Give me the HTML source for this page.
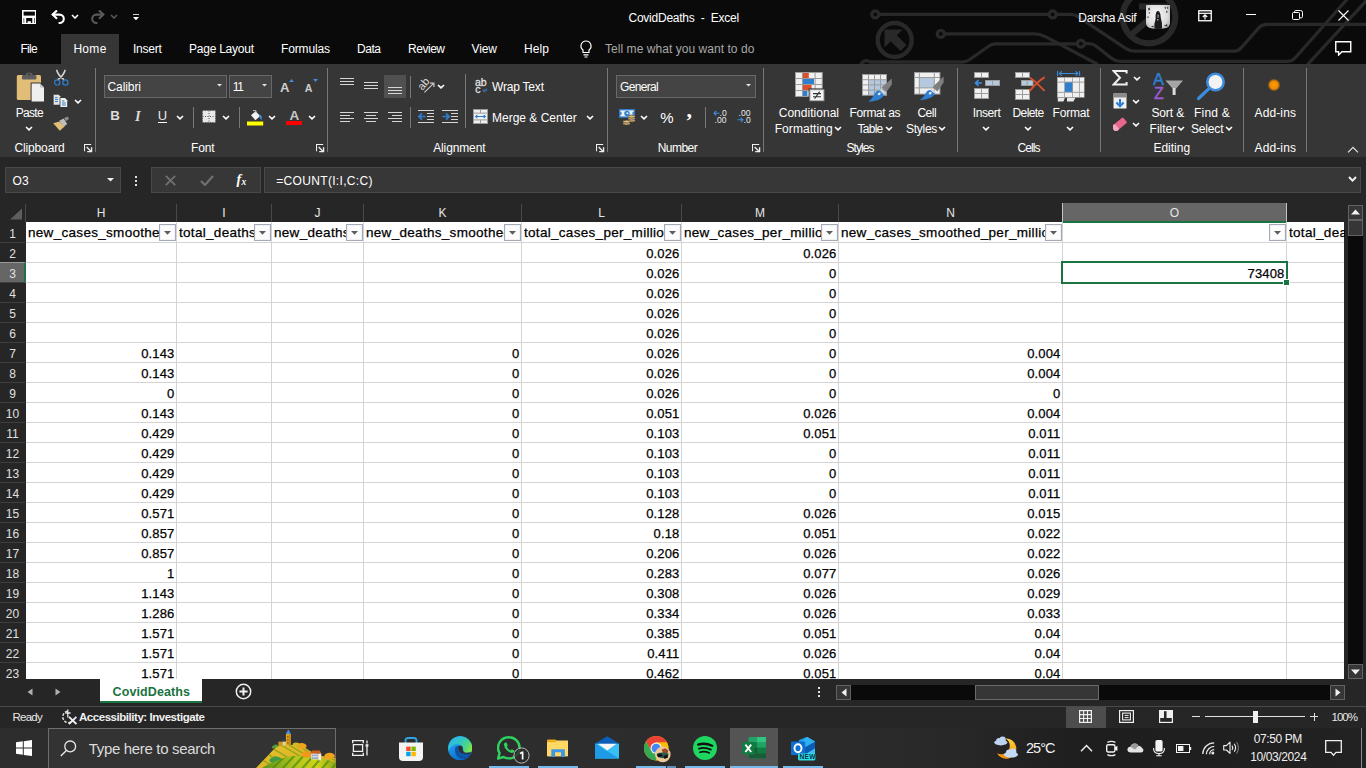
<!DOCTYPE html>
<html lang="en"><head><meta charset="utf-8"><title>CovidDeaths - Excel</title>
<style>
html,body{margin:0;padding:0;}
body{width:1366px;height:768px;overflow:hidden;background:#262626;position:relative;font-family:"Liberation Sans",sans-serif;font-size:12px;color:#fff;}
.a{position:absolute;display:block;box-sizing:border-box;}
.t{position:absolute;white-space:pre;display:block;}
.c{position:absolute;white-space:pre;display:block;color:#000;font-size:13px;line-height:20px;height:20px;overflow:hidden;-webkit-text-stroke:.25px #000;}
.r{text-align:right;}
.fb{position:absolute;box-sizing:border-box;width:17px;height:17px;border:1px solid #a4abb6;background:#fcfcfc;box-shadow:inset 0 0 0 1px #f0f2f5;}
.fb svg{position:absolute;left:4px;top:6.4px;}
.sep{position:absolute;width:1px;background:#787878;}
</style></head>
<body>
<div class="a" style="left:0px;top:0px;width:1366px;height:64px;background:#0a0a0a;"></div>
<svg class="a" style="left:0px;top:0px;" width="1366" height="64" viewBox="0 0 1366 64">
<g fill="none" stroke="#292929" stroke-width="3.3" stroke-linecap="round" stroke-linejoin="round">
<circle cx="875.3" cy="14.4" r="3.5"/><path d="M880 14.4 H1048"/><circle cx="1052.7" cy="14.4" r="3.5"/>
<path d="M1057.4 14.4 H1071 Q1075 14.4 1078 16.6 L1126 48.6 Q1130 51.2 1135 51.2 H1234 Q1238 51.2 1241 48 L1259 27.6 Q1262 24.4 1267 24.4 H1366"/>
<circle cx="894.7" cy="40" r="17" stroke-width="4.4"/>
<circle cx="940.8" cy="33.9" r="3.5"/><path d="M945.5 33.9 H1034 Q1040 33.9 1045 36.4 L1097 64"/>
<path d="M861 64 Q865 58.5 870 62 H962 Q966 62 969 60 L989 46 Q992 43.8 996 43.8 H1076"/><circle cx="1080.9" cy="43.7" r="3.5"/>
<path d="M1085.6 43.7 H1089 Q1093 43.7 1096 46 L1112 58.6 Q1115.5 61.3 1120 61.3 H1288 Q1292 61.3 1295 58 L1346.5 0"/>
<path d="M1308 64 L1366 1"/>
<circle cx="1149" cy="17" r="26.3" stroke-width="6.2"/>
<path d="M1132 34 L1162 8 M1139 6.5 H1165 V28" stroke-width="6" stroke-linecap="butt" stroke-linejoin="miter"/>
</g>
<path d="M884.5 29.5 H902.5 L896.8 35.2 L906.5 45 L900.5 51 L890.7 41.3 L884.5 47.5 Z" fill="#292929"/>
</svg>
<svg class="a" style="left:21.7px;top:9.7px;" width="14.5" height="14.5" viewBox="0 0 14.5 14.5"><rect x=".8" y=".8" width="12.9" height="12.9" fill="none" stroke="#fff" stroke-width="1.6"/><rect x=".8" y="5.6" width="12.9" height="2.4" fill="#fff"/><rect x="2.2" y="7.8" width="2" height="6" fill="#fff"/><rect x="10.3" y="7.8" width="2" height="6" fill="#fff"/><rect x="5.6" y="11.2" width="3.2" height="2.6" fill="#fff"/></svg>
<svg class="a" style="left:51px;top:9.5px;" width="15" height="15" viewBox="0 0 15 15"><path d="M1.6 4.6 H8.6 A4.2 4.2 0 0 1 8.6 13 H7.6" fill="none" stroke="#fff" stroke-width="2.1"/><path d="M6 0.4 L1.6 4.6 L6 8.8" fill="none" stroke="#fff" stroke-width="2.1"/></svg>
<svg class="a" style="left:71px;top:14px;" width="8" height="5" viewBox="0 0 8 5"><path d="M1 1 L4.0 4 L7 1" fill="none" stroke="#fff" stroke-width="1.55"/></svg>
<svg class="a" style="left:89.5px;top:9.5px;" width="15" height="15" viewBox="0 0 15 15"><g transform="translate(15,0) scale(-1,1)"><path d="M1.6 4.6 H8.6 A4.2 4.2 0 0 1 8.6 13 H7.6" fill="none" stroke="#5a5a5a" stroke-width="2.1"/><path d="M6 0.4 L1.6 4.6 L6 8.8" fill="none" stroke="#5a5a5a" stroke-width="2.1"/></g></svg>
<svg class="a" style="left:110px;top:14px;" width="8" height="5" viewBox="0 0 8 5"><path d="M1 1 L4.0 4 L7 1" fill="none" stroke="#5a5a5a" stroke-width="1.55"/></svg>
<div class="a" style="left:132.5px;top:13.6px;width:6px;height:1.1px;background:#d0d0d0;"></div>
<svg class="a" style="left:132.5px;top:16.8px;" width="6" height="3.4" viewBox="0 0 6 3.4"><path d="M0 0 H6 L3.0 3.4 Z" fill="#fff"/></svg>
<span id="t0" class="t" style="left:628.5px;top:10.3px;font-size:12px;line-height:16px;color:#fff;letter-spacing:-0.24px;">CovidDeaths  -  Excel</span>
<span id="t1" class="t" style="left:1078.3px;top:10.3px;font-size:12px;line-height:16px;color:#fff;letter-spacing:-0.30px;">Darsha Asif</span>
<svg class="a" style="left:1146px;top:5px;" width="24" height="24" viewBox="0 0 24 24"><defs><clipPath id="avc"><path d="M0 0 H24 V18 Q24 22 19 23.2 Q12 24.6 5 23.2 Q0 22 0 18 Z"/></clipPath>
<radialGradient id="avg" cx=".45" cy=".4" r=".75"><stop offset="0" stop-color="#fafafa"/><stop offset=".6" stop-color="#dcdcdc"/><stop offset="1" stop-color="#9a9a9a"/></radialGradient></defs>
<g clip-path="url(#avc)"><rect width="24" height="25" fill="url(#avg)"/>
<path d="M10.2 7.4 Q11.6 5.2 13.2 6.6 Q15 9 14.8 13 Q16.6 18 16 24 H8.4 Q8 18 9.6 14 Q9 10 10.2 7.4 Z" fill="#1a1a1a"/>
<path d="M11.4 9.4 Q12.4 8.6 12.8 10.2 L12.6 13 L11.4 13 Z" fill="#8a8a8a"/><circle cx="11.8" cy="14.8" r=".7" fill="#e0e0e0"/>
<path d="M2 3.4 l1.6 -1 l.6 2 l-1.4 1.4 z M2.6 7 l1.4 .4 l-.6 1.8 z M18.4 2 l2 .6 l-1 1.6 z M21 1.6 l1.6 1.4 l-1.2 1.2 z M20 5.6 l2 1.4 l-1.6 1 z M1.4 11 l1.6 1 l-1.2 1.4z M18 21 l3 -2 l.6 2.4 z M5 21.6 l2.4 -1 l.4 2 z" fill="#3a3a3a"/>
</g></svg>
<svg class="a" style="left:1197.5px;top:9.5px;" width="14" height="12" viewBox="0 0 14 12"><rect x=".75" y=".75" width="12.5" height="10" fill="none" stroke="#fff" stroke-width="1.3"/><path d="M.75 3.3 H13.25" stroke="#fff" stroke-width="1.2"/><path d="M7 9.5 V5 M4.8 7 L7 4.9 L9.2 7" fill="none" stroke="#fff" stroke-width="1.2"/></svg>
<div class="a" style="left:1246px;top:14px;width:10px;height:1px;background:#fff;"></div>
<svg class="a" style="left:1292px;top:10px;" width="11" height="11" viewBox="0 0 11 11"><rect x=".5" y="2.5" width="7" height="7" rx="1" fill="none" stroke="#fff" stroke-width="1"/><path d="M2.5 2.5 V1.8 Q2.5 .5 3.8 .5 H8.6 Q10.5 .5 10.5 2.4 V6.6 Q10.5 7.8 9.3 7.8 H7.6" fill="none" stroke="#fff" stroke-width="1"/></svg>
<svg class="a" style="left:1338px;top:10px;" width="11" height="11" viewBox="0 0 11 11"><path d="M.5 .5 L10.5 10.5 M10.5 .5 L.5 10.5" stroke="#fff" stroke-width="1.1"/></svg>
<svg class="a" style="left:1335px;top:41px;" width="17" height="15" viewBox="0 0 17 15"><path d="M.75 .75 H15.75 V10.75 H7 L3.6 14 V10.75 H.75 Z" fill="none" stroke="#fff" stroke-width="1.4" stroke-linejoin="miter"/></svg>
<div class="a" style="left:61px;top:34px;width:58px;height:30px;background:#363636;"></div>
<span id="t2" class="t" style="left:20.4px;top:41.2px;font-size:12px;line-height:16px;color:#fff;letter-spacing:-0.65px;">File</span>
<span id="t3" class="t" style="left:73.4px;top:41.2px;font-size:12px;line-height:16px;color:#fff;letter-spacing:0.30px;">Home</span>
<span id="t4" class="t" style="left:133.0px;top:41.2px;font-size:12px;line-height:16px;color:#fff;letter-spacing:-0.24px;">Insert</span>
<span id="t5" class="t" style="left:189.0px;top:41.2px;font-size:12px;line-height:16px;color:#fff;letter-spacing:-0.24px;">Page Layout</span>
<span id="t6" class="t" style="left:281.0px;top:41.2px;font-size:12px;line-height:16px;color:#fff;letter-spacing:-0.14px;">Formulas</span>
<span id="t7" class="t" style="left:357.0px;top:41.2px;font-size:12px;line-height:16px;color:#fff;letter-spacing:-0.45px;">Data</span>
<span id="t8" class="t" style="left:408.0px;top:41.2px;font-size:12px;line-height:16px;color:#fff;letter-spacing:-0.47px;">Review</span>
<span id="t9" class="t" style="left:471.5px;top:41.2px;font-size:12px;line-height:16px;color:#fff;letter-spacing:-0.10px;">View</span>
<span id="t10" class="t" style="left:524.0px;top:41.2px;font-size:12px;line-height:16px;color:#fff;letter-spacing:0.10px;">Help</span>
<span id="t11" class="t" style="left:605.0px;top:41.2px;font-size:12px;line-height:16px;color:#a8a8a8;letter-spacing:0.05px;">Tell me what you want to do</span>
<svg class="a" style="left:578.5px;top:40px;" width="14" height="18" viewBox="0 0 14 18"><path d="M7 1 A5 5 0 0 1 10 10 V12.5 H4 V10 A5 5 0 0 1 7 1 Z" fill="none" stroke="#fff" stroke-width="1.2"/><path d="M4.5 14.8 H9.5 M5.5 17 H8.5" stroke="#fff" stroke-width="1.2"/></svg>
<div class="a" style="left:0px;top:64px;width:1366px;height:93px;background:#363636;"></div>
<svg class="a" style="left:16px;top:72px;" width="29" height="31" viewBox="0 0 29 31">
<rect x="0.8" y="3" width="24.2" height="25" rx="1.6" fill="#e2bd78"/>
<rect x="6" y="3" width="14.4" height="4.4" rx="1.2" fill="#5e5e5e"/>
<path d="M10 4 V2.8 Q10 .4 13.2 .4 Q16.4 .4 16.4 2.8 V4 Z" fill="#5e5e5e"/><circle cx="13.2" cy="2.6" r="1.1" fill="#363636"/>
<path d="M14.6 10.6 H24.4 L29 15.2 V30 H14.6 Z" fill="#363636"/>
<path d="M15.6 11.6 H24 L28 15.6 V29.4 H15.6 Z" fill="#efefef"/>
<path d="M24 11.6 V15.6 H28 Z" fill="#c4c4c4"/></svg>
<span id="t12" class="t" style="left:15.7px;top:104.8px;font-size:12px;line-height:16px;color:#fff;letter-spacing:-0.70px;">Paste</span>
<svg class="a" style="left:24.5px;top:126px;" width="8" height="4.9" viewBox="0 0 8 4.9"><path d="M1 1 L4.0 3.9 L7 1" fill="none" stroke="#fff" stroke-width="1.55"/></svg>
<svg class="a" style="left:53.6px;top:70px;overflow:visible;" width="14" height="16" viewBox="0 0 14 16"><g transform="translate(2.2,0)"><path d="M.6 .4 Q2 5 7.4 9.4 M8.8 .4 Q7.4 5 2 9.4" stroke="#d4d4d4" stroke-width="1.6" fill="none" stroke-linecap="round"/>
<circle cx="1.2" cy="12.4" r="2.6" fill="none" stroke="#2f7ed0" stroke-width="1.2" transform="translate(-0.2,0)"/><circle cx="9.2" cy="12.4" r="2.6" fill="none" stroke="#2f7ed0" stroke-width="1.2"/></g></svg>
<svg class="a" style="left:52.6px;top:93.6px;" width="15.5" height="14.5" viewBox="0 0 15.5 14.5"><path d="M.4 .4 H5.6 L7.8 2.6 V11 H.4 Z" fill="#e6e6e6" stroke="#363636" stroke-width=".5"/>
<path d="M2 3.6 H4.6 M2 5.6 H5 M2 7.6 H5" stroke="#2f7ed0" stroke-width="1"/>
<path d="M6.6 3.2 H12.4 L15 5.8 V13.8 H6.6 Z" fill="#363636"/>
<path d="M7.4 4 H12 L14.2 6.2 V13 H7.4 Z" fill="#efefef"/>
<path d="M9 7 H11.4 M9 9 H12.8 M9 11 H12.8" stroke="#2f7ed0" stroke-width="1"/></svg>
<svg class="a" style="left:74.3px;top:99px;" width="8" height="4.9" viewBox="0 0 8 4.9"><path d="M1 1 L4.0 3.9 L7 1" fill="none" stroke="#fff" stroke-width="1.55"/></svg>
<svg class="a" style="left:53.2px;top:116.4px;" width="16.5" height="15" viewBox="0 0 16.5 15"><path d="M.2 7.2 L6.6 5.4 L11.6 10.4 L6.8 14.8 Z" fill="#e2bd78"/>
<path d="M6.2 4.8 L10.6 2.4 L14.2 8 L11 10.6 Z" fill="#bdbdbd"/>
<path d="M11.2 2 L14.8 .4 L16 2.8 L12.8 5.2 Z" fill="#8e8e8e"/></svg>
<span id="t13" class="t" style="left:14.4px;top:140.2px;font-size:12px;line-height:16px;color:#fff;letter-spacing:-0.13px;">Clipboard</span>
<svg class="a" style="left:84px;top:144px;" width="9" height="9" viewBox="0 0 9 9"><path d="M.5 7.2 V.5 H7.2" fill="none" stroke="#f0f0f0" stroke-width="1.1"/><path d="M2.6 3 L7 7.2" fill="none" stroke="#f0f0f0" stroke-width="1.3"/><path d="M7.6 3.2 V7.6 H3.2" fill="none" stroke="#f0f0f0" stroke-width="1.3"/></svg>
<div class="sep" style="left:95px;top:68px;height:84px"></div>
<div class="a" style="left:104px;top:75px;width:123px;height:23px;background:#444;border:1px solid #686868;"></div>
<div class="a" style="left:229px;top:75px;width:43px;height:23px;background:#444;border:1px solid #686868;"></div>
<span id="t14" class="t" style="left:107.5px;top:79.0px;font-size:12px;line-height:16px;color:#fff;letter-spacing:-0.09px;">Calibri</span>
<span id="t15" class="t" style="left:232.7px;top:79.0px;font-size:12px;line-height:16px;color:#fff;letter-spacing:-1.20px;">11</span>
<svg class="a" style="left:217px;top:84.2px;" width="5" height="2.6" viewBox="0 0 5 2.6"><path d="M0 0 H5 L2.5 2.6 Z" fill="#e6e6e6"/></svg>
<svg class="a" style="left:262px;top:84.2px;" width="5" height="2.6" viewBox="0 0 5 2.6"><path d="M0 0 H5 L2.5 2.6 Z" fill="#e6e6e6"/></svg>
<span id="t16" class="t" style="left:280.0px;top:79.5px;font-size:13.2px;line-height:16px;color:#cfcfcf;font-weight:700;">A</span>
<svg class="a" style="left:289px;top:78.5px;" width="5" height="3" viewBox="0 0 5 3"><path d="M0 3 L2.5 0 L5 3 Z" fill="#3c8de0"/></svg>
<span id="t17" class="t" style="left:304.8px;top:80.4px;font-size:10.6px;line-height:16px;color:#cfcfcf;font-weight:700;">A</span>
<svg class="a" style="left:312.5px;top:79px;" width="5" height="3" viewBox="0 0 5 3"><path d="M0 0 H5 L2.5 3 Z" fill="#3c8de0"/></svg>
<span id="t18" class="t" style="left:110.2px;top:108.4px;font-size:13.3px;line-height:16px;color:#dcdcdc;font-weight:700;">B</span>
<span id="t19" class="t" style="left:135.0px;top:108.0px;font-size:14.5px;line-height:16px;color:#dcdcdc;font-weight:700;font-family:'Liberation Serif',serif;font-style:italic;">I</span>
<span id="t20" class="t" style="left:157.8px;top:108.3px;font-size:13px;line-height:16px;color:#e6e6e6;">U</span>
<div class="a" style="left:158px;top:122px;width:9px;height:1px;background:#fff;"></div>
<svg class="a" style="left:176px;top:115px;" width="8" height="4.9" viewBox="0 0 8 4.9"><path d="M1 1 L4.0 3.9 L7 1" fill="none" stroke="#fff" stroke-width="1.55"/></svg>
<div class="sep" style="left:193px;top:107px;height:21px"></div>
<svg class="a" style="left:201.5px;top:110px;" width="14" height="13" viewBox="0 0 14 13"><rect x=".5" y=".5" width="13" height="12" fill="#e8e8e8"/><g stroke="#555" stroke-width="1" stroke-dasharray="1 1.5"><path d="M.5 .5 H13.5 M.5 6.5 H13.5 M.5 12.5 H13.5 M.5 .5 V12.5 M7 .5 V12.5 M13.5 .5 V12.5"/></g></svg>
<svg class="a" style="left:222.3px;top:115px;" width="8" height="4.9" viewBox="0 0 8 4.9"><path d="M1 1 L4.0 3.9 L7 1" fill="none" stroke="#fff" stroke-width="1.55"/></svg>
<div class="sep" style="left:239px;top:107px;height:21px"></div>
<svg class="a" style="left:247px;top:109.5px;" width="17" height="16" viewBox="0 0 17 16"><rect x="0" y="11.5" width="16.2" height="4" fill="#ffff00"/>
<path d="M4 5.2 L8.6 1.2 L13.2 6 L8.4 10.2 Z" fill="#f3f3f3"/>
<path d="M6 0.6 H9 V3" fill="none" stroke="#bdbdbd" stroke-width="1"/>
<path d="M12.5 4.2 Q16 6 14.4 10 Q12.5 8 12.2 6 Z" fill="#3c8de0"/></svg>
<svg class="a" style="left:268.2px;top:115px;" width="8" height="4.9" viewBox="0 0 8 4.9"><path d="M1 1 L4.0 3.9 L7 1" fill="none" stroke="#fff" stroke-width="1.55"/></svg>
<span id="t21" class="t" style="left:289.6px;top:108.1px;font-size:13.5px;line-height:16px;color:#c8c8c8;font-weight:700;">A</span>
<div class="a" style="left:286px;top:121px;width:16.2px;height:4px;background:#ff0000;"></div>
<svg class="a" style="left:307.6px;top:115px;" width="8" height="4.9" viewBox="0 0 8 4.9"><path d="M1 1 L4.0 3.9 L7 1" fill="none" stroke="#fff" stroke-width="1.55"/></svg>
<span id="t22" class="t" style="left:191.0px;top:140.2px;font-size:12px;line-height:16px;color:#fff;letter-spacing:-0.17px;">Font</span>
<svg class="a" style="left:316px;top:144px;" width="9" height="9" viewBox="0 0 9 9"><path d="M.5 7.2 V.5 H7.2" fill="none" stroke="#f0f0f0" stroke-width="1.1"/><path d="M2.6 3 L7 7.2" fill="none" stroke="#f0f0f0" stroke-width="1.3"/><path d="M7.6 3.2 V7.6 H3.2" fill="none" stroke="#f0f0f0" stroke-width="1.3"/></svg>
<div class="sep" style="left:327px;top:68px;height:84px"></div>
<svg class="a" style="left:340px;top:78px;" width="14" height="7" viewBox="0 0 14 7"><rect x="0" y="0" width="14" height="1" fill="#d6d6d6"/><rect x="0" y="3" width="14" height="1" fill="#d6d6d6"/><rect x="0" y="6" width="14" height="1" fill="#d6d6d6"/></svg>
<svg class="a" style="left:364px;top:82px;" width="14" height="7" viewBox="0 0 14 7"><rect x="0" y="0" width="14" height="1" fill="#d6d6d6"/><rect x="0" y="3" width="14" height="1" fill="#d6d6d6"/><rect x="0" y="6" width="14" height="1" fill="#d6d6d6"/></svg>
<div class="a" style="left:384px;top:75px;width:22px;height:23px;background:#505050;"></div>
<svg class="a" style="left:388px;top:87px;" width="14" height="7" viewBox="0 0 14 7"><rect x="0" y="0" width="14" height="1" fill="#d6d6d6"/><rect x="0" y="3" width="14" height="1" fill="#d6d6d6"/><rect x="0" y="6" width="14" height="1" fill="#d6d6d6"/></svg>
<div class="sep" style="left:410px;top:76px;height:22px"></div>
<svg class="a" style="left:417px;top:75px;" width="20" height="19" viewBox="0 0 20 19"><g transform="translate(6.6,9) rotate(-50)"><text x="-6.2" y="3.6" font-family="Liberation Sans, sans-serif" font-size="11" fill="#dcdcdc">ab</text></g>
<path d="M7.4 17.4 L16.6 8.4 M16.9 12 V8.1 H13" fill="none" stroke="#c8c8c8" stroke-width="1.2"/></svg>
<svg class="a" style="left:437.4px;top:83.8px;" width="8" height="4.9" viewBox="0 0 8 4.9"><path d="M1 1 L4.0 3.9 L7 1" fill="none" stroke="#fff" stroke-width="1.55"/></svg>
<div class="sep" style="left:465px;top:74px;height:54px"></div>
<svg class="a" style="left:475px;top:77.8px;" width="14" height="16" viewBox="0 0 14 16"><text x="0" y="7.8" font-family="Liberation Sans, sans-serif" font-size="10.5" fill="#e0e0e0" stroke="#e0e0e0" stroke-width=".3">ab</text>
<text x="0.2" y="15.2" font-family="Liberation Sans, sans-serif" font-size="10.5" fill="#e0e0e0" stroke="#e0e0e0" stroke-width=".3">c</text>
<path d="M11.4 10.4 V12.8 H8.2 M9.6 11.2 L8 12.8 L9.6 14.4" fill="none" stroke="#2f7ed0" stroke-width="1"/></svg>
<span id="t23" class="t" style="left:492.0px;top:79.4px;font-size:12px;line-height:16px;color:#fff;letter-spacing:-0.20px;">Wrap Text</span>
<svg class="a" style="left:340px;top:112px;" width="14" height="10" viewBox="0 0 14 10"><rect x="0" y="0" width="14" height="1" fill="#d6d6d6"/><rect x="0" y="3" width="10" height="1" fill="#d6d6d6"/><rect x="0" y="6" width="14" height="1" fill="#d6d6d6"/><rect x="0" y="9" width="10" height="1" fill="#d6d6d6"/></svg>
<svg class="a" style="left:364px;top:112px;" width="14" height="10" viewBox="0 0 14 10"><rect x="0.0" y="0" width="14" height="1" fill="#d6d6d6"/><rect x="2.0" y="3" width="10" height="1" fill="#d6d6d6"/><rect x="0.0" y="6" width="14" height="1" fill="#d6d6d6"/><rect x="2.0" y="9" width="10" height="1" fill="#d6d6d6"/></svg>
<svg class="a" style="left:388px;top:112px;" width="14" height="10" viewBox="0 0 14 10"><rect x="0" y="0" width="14" height="1" fill="#d6d6d6"/><rect x="4" y="3" width="10" height="1" fill="#d6d6d6"/><rect x="0" y="6" width="14" height="1" fill="#d6d6d6"/><rect x="4" y="9" width="10" height="1" fill="#d6d6d6"/></svg>
<div class="sep" style="left:410px;top:107px;height:21px"></div>
<svg class="a" style="left:418px;top:110px;" width="16" height="13" viewBox="0 0 16 13"><rect x="0" y="0" width="16" height="1" fill="#d6d6d6"/><rect x="9" y="3" width="7" height="1" fill="#d6d6d6"/><rect x="9" y="6" width="7" height="1" fill="#d6d6d6"/><rect x="9" y="9" width="7" height="1" fill="#d6d6d6"/><rect x="0" y="12" width="16" height="1" fill="#d6d6d6"/><path d="M7.6 6.5 H1.2 M4 3.4 L.9 6.5 L4 9.6" fill="none" stroke="#2f7ed0" stroke-width="1.7"/></svg>
<svg class="a" style="left:442px;top:110px;" width="16" height="13" viewBox="0 0 16 13"><rect x="0" y="0" width="16" height="1" fill="#d6d6d6"/><rect x="9" y="3" width="7" height="1" fill="#d6d6d6"/><rect x="9" y="6" width="7" height="1" fill="#d6d6d6"/><rect x="9" y="9" width="7" height="1" fill="#d6d6d6"/><rect x="0" y="12" width="16" height="1" fill="#d6d6d6"/><path d="M.4 6.5 H6.8 M4 3.4 L7.1 6.5 L4 9.6" fill="none" stroke="#2f7ed0" stroke-width="1.7"/></svg>
<svg class="a" style="left:473px;top:109px;" width="15" height="15" viewBox="0 0 15 15"><rect x="0" y="0" width="15" height="15" fill="#9c9c9c"/>
<rect x="1" y="1" width="6" height="2.6" fill="#f0f0f0"/><rect x="8" y="1" width="6" height="2.6" fill="#f0f0f0"/>
<rect x="1" y="4.6" width="13" height="5.8" fill="#f0f0f0"/>
<rect x="1" y="11.4" width="6" height="2.6" fill="#f0f0f0"/><rect x="8" y="11.4" width="6" height="2.6" fill="#f0f0f0"/>
<path d="M2.6 7.5 H12.4 M4.4 5.9 L2.6 7.5 L4.4 9.1 M10.6 5.9 L12.4 7.5 L10.6 9.1" fill="none" stroke="#2f7ed0" stroke-width="1.1"/></svg>
<span id="t24" class="t" style="left:492.0px;top:110.0px;font-size:12px;line-height:16px;color:#fff;">Merge &amp; Center</span>
<svg class="a" style="left:586px;top:115px;" width="8" height="4.9" viewBox="0 0 8 4.9"><path d="M1 1 L4.0 3.9 L7 1" fill="none" stroke="#fff" stroke-width="1.55"/></svg>
<span id="t25" class="t" style="left:433.2px;top:140.2px;font-size:12px;line-height:16px;color:#fff;letter-spacing:-0.13px;">Alignment</span>
<svg class="a" style="left:596px;top:144px;" width="9" height="9" viewBox="0 0 9 9"><path d="M.5 7.2 V.5 H7.2" fill="none" stroke="#f0f0f0" stroke-width="1.1"/><path d="M2.6 3 L7 7.2" fill="none" stroke="#f0f0f0" stroke-width="1.3"/><path d="M7.6 3.2 V7.6 H3.2" fill="none" stroke="#f0f0f0" stroke-width="1.3"/></svg>
<div class="sep" style="left:607px;top:68px;height:84px"></div>
<div class="a" style="left:616px;top:75px;width:140px;height:23px;background:#444;border:1px solid #686868;"></div>
<span id="t26" class="t" style="left:620.0px;top:79.0px;font-size:12px;line-height:16px;color:#fff;letter-spacing:-0.67px;">General</span>
<svg class="a" style="left:745.8px;top:84.2px;" width="5" height="2.6" viewBox="0 0 5 2.6"><path d="M0 0 H5 L2.5 2.6 Z" fill="#e6e6e6"/></svg>
<svg class="a" style="left:619px;top:109px;" width="17" height="17" viewBox="0 0 17 17"><rect x="0" y="0" width="16" height="8.8" fill="#2f7ed0"/><rect x="1.4" y="1.4" width="13.2" height="6" fill="#f0f0f0"/>
<rect x="0" y="3.2" width="2.6" height="2.4" fill="#2f7ed0"/><rect x="13.4" y="3.2" width="2.6" height="2.4" fill="#2f7ed0"/>
<circle cx="8" cy="4.4" r="2.7" fill="#2f7ed0"/><circle cx="8.4" cy="4.2" r="1" fill="#f0f0f0"/>
<g fill="#e2bd78" stroke="#363636" stroke-width=".7"><ellipse cx="12.6" cy="11.6" rx="3.6" ry="1.5"/><ellipse cx="12.6" cy="9.6" rx="3.6" ry="1.5"/><ellipse cx="12.6" cy="7.6" rx="3.6" ry="1.5"/>
<ellipse cx="7.6" cy="14.6" rx="3.6" ry="1.5"/><ellipse cx="7.6" cy="12.6" rx="3.6" ry="1.5"/></g></svg>
<svg class="a" style="left:640.3px;top:115px;" width="8" height="4.9" viewBox="0 0 8 4.9"><path d="M1 1 L4.0 3.9 L7 1" fill="none" stroke="#fff" stroke-width="1.55"/></svg>
<span id="t27" class="t" style="left:660.2px;top:110.0px;font-size:15px;line-height:16px;color:#fff;">%</span>
<span id="t28" class="t" style="left:686.4px;top:95.9px;font-size:22px;line-height:28px;color:#fff;font-weight:700;font-family:'Liberation Serif',serif;">,</span>
<div class="sep" style="left:705px;top:107px;height:21px"></div>
<svg class="a" style="left:713px;top:110.3px;" width="15.5" height="14" viewBox="0 0 15.5 14"><path d="M1 3.2 H6.4 M3.2 1 L1 3.2 L3.2 5.4" fill="none" stroke="#3c8de0" stroke-width="1.1"/><text x="6.6" y="6.2" font-family="Liberation Sans, sans-serif" font-size="8.6" fill="#e8e8e8">.0</text><text x="1.6" y="13.2" font-family="Liberation Sans, sans-serif" font-size="8.6" fill="#e8e8e8">.00</text></svg>
<svg class="a" style="left:737px;top:110.3px;" width="15.5" height="14" viewBox="0 0 15.5 14"><path d="M0.6 9.8 H6 M3.8 7.6 L6 9.8 L3.8 12" fill="none" stroke="#3c8de0" stroke-width="1.1"/><text x="1.6" y="6.2" font-family="Liberation Sans, sans-serif" font-size="8.6" fill="#e8e8e8">.00</text><text x="6.6" y="13.2" font-family="Liberation Sans, sans-serif" font-size="8.6" fill="#e8e8e8">.0</text></svg>
<span id="t29" class="t" style="left:657.7px;top:140.2px;font-size:12px;line-height:16px;color:#fff;letter-spacing:-0.52px;">Number</span>
<svg class="a" style="left:752px;top:144px;" width="9" height="9" viewBox="0 0 9 9"><path d="M.5 7.2 V.5 H7.2" fill="none" stroke="#f0f0f0" stroke-width="1.1"/><path d="M2.6 3 L7 7.2" fill="none" stroke="#f0f0f0" stroke-width="1.3"/><path d="M7.6 3.2 V7.6 H3.2" fill="none" stroke="#f0f0f0" stroke-width="1.3"/></svg>
<div class="sep" style="left:763px;top:68px;height:84px"></div>
<svg class="a" style="left:795px;top:71.5px;" width="30" height="30" viewBox="0 0 30 30"><rect x="0" y="0" width="27.80" height="25.00" fill="#9c9c9c"/><rect x="1" y="1" width="6" height="5" fill="#f0f0f0"/><rect x="1" y="7" width="6" height="5" fill="#f0f0f0"/><rect x="1" y="13" width="6" height="5" fill="#f0f0f0"/><rect x="1" y="19" width="6" height="5" fill="#f0f0f0"/><rect x="8" y="1" width="11.6" height="5" fill="#f0f0f0"/><rect x="8" y="7" width="11.6" height="5" fill="#f0f0f0"/><rect x="8" y="13" width="11.6" height="5" fill="#f0f0f0"/><rect x="8" y="19" width="11.6" height="5" fill="#f0f0f0"/><rect x="20.6" y="1" width="6.2" height="5" fill="#f0f0f0"/><rect x="20.6" y="7" width="6.2" height="5" fill="#f0f0f0"/><rect x="20.6" y="13" width="6.2" height="5" fill="#f0f0f0"/><rect x="20.6" y="19" width="6.2" height="5" fill="#f0f0f0"/><rect x="8" y="1" width="5.8" height="5" fill="#dc4f2a"/><rect x="8" y="7" width="11" height="5" fill="#2f7ed0"/><rect x="8" y="13" width="8.6" height="5" fill="#dc4f2a"/><rect x="8" y="19" width="4.4" height="5" fill="#2f7ed0"/><rect x="13.6" y="16.4" width="16.4" height="13.6" fill="#363636"/><rect x="14.4" y="17.2" width="15" height="12" fill="#9c9c9c"/><rect x="15.4" y="18.2" width="13" height="10" fill="#f4f4f4"/><path d="M18 21.6 H26 M18 24.8 H26 M24.6 19.6 L19.6 26.8" stroke="#333" stroke-width="1.1" fill="none"/></svg>
<span id="t30" class="t" style="left:778.7px;top:105.3px;font-size:12px;line-height:16px;color:#fff;letter-spacing:0.03px;">Conditional</span>
<span id="t31" class="t" style="left:774.7px;top:121.2px;font-size:12px;line-height:16px;color:#fff;letter-spacing:0.07px;">Formatting</span>
<svg class="a" style="left:834.4px;top:125.7px;" width="8" height="4.9" viewBox="0 0 8 4.9"><path d="M1 1 L4.0 3.9 L7 1" fill="none" stroke="#fff" stroke-width="1.55"/></svg>
<svg class="a" style="left:862px;top:72px;" width="31" height="31" viewBox="0 0 31 31"><g transform="translate(0,2)"><rect x="0" y="0" width="25.00" height="21.80" fill="#9c9c9c"/><rect x="1" y="1" width="5" height="4.2" fill="#f0f0f0"/><rect x="1" y="6.2" width="5" height="4.2" fill="#f0f0f0"/><rect x="1" y="11.4" width="5" height="4.2" fill="#f0f0f0"/><rect x="1" y="16.6" width="5" height="4.2" fill="#f0f0f0"/><rect x="7" y="1" width="5" height="4.2" fill="#f0f0f0"/><rect x="7" y="6.2" width="5" height="4.2" fill="#b4c8de"/><rect x="7" y="11.4" width="5" height="4.2" fill="#b4c8de"/><rect x="7" y="16.6" width="5" height="4.2" fill="#b4c8de"/><rect x="13" y="1" width="5" height="4.2" fill="#f0f0f0"/><rect x="13" y="6.2" width="5" height="4.2" fill="#b4c8de"/><rect x="13" y="11.4" width="5" height="4.2" fill="#b4c8de"/><rect x="13" y="16.6" width="5" height="4.2" fill="#b4c8de"/><rect x="19" y="1" width="5" height="4.2" fill="#f0f0f0"/><rect x="19" y="6.2" width="5" height="4.2" fill="#b4c8de"/><rect x="19" y="11.4" width="5" height="4.2" fill="#b4c8de"/><rect x="19" y="16.6" width="5" height="4.2" fill="#b4c8de"/></g><path d="M29.799999999999997 6.3999999999999995 L29.799999999999997 12.399999999999999 L24.400000000000002 20.0 L19.6 15.600000000000001 Z" fill="#7e7e7e"/><path d="M19.0 16.8 L23.0 20.6 L22.0 21.8 L17.8 18.0 Z" fill="#d8d8d8"/><path d="M17.400000000000002 18.6 L21.6 22.400000000000002 Q21.1 28.3 6.6 29.8 Q11.6 24.6 13.000000000000002 21.0 Q15.100000000000001 18.200000000000003 17.400000000000002 18.6 Z" fill="#2f7ed0"/><ellipse cx="17.200000000000003" cy="21.8" rx="1.6" ry="1.1" fill="#eaf2fb" transform="rotate(-40 17.200000000000003 21.8)"/></svg>
<span id="t32" class="t" style="left:849.6px;top:105.3px;font-size:12px;line-height:16px;color:#fff;letter-spacing:-0.38px;">Format as</span>
<span id="t33" class="t" style="left:857.6px;top:121.2px;font-size:12px;line-height:16px;color:#fff;letter-spacing:-0.77px;">Table</span>
<svg class="a" style="left:885px;top:125.7px;" width="8" height="4.9" viewBox="0 0 8 4.9"><path d="M1 1 L4.0 3.9 L7 1" fill="none" stroke="#fff" stroke-width="1.55"/></svg>
<svg class="a" style="left:914px;top:72px;" width="31" height="31" viewBox="0 0 31 31"><rect x="0" y="0" width="26.40" height="22.60" fill="#9c9c9c"/><rect x="1" y="1" width="3.8" height="4" fill="#f0f0f0"/><rect x="1" y="6" width="3.8" height="9.4" fill="#f0f0f0"/><rect x="1" y="16.4" width="3.8" height="5.2" fill="#f0f0f0"/><rect x="5.8" y="1" width="14" height="4" fill="#f0f0f0"/><rect x="5.8" y="6" width="14" height="9.4" fill="#b4c8de"/><rect x="5.8" y="16.4" width="14" height="5.2" fill="#f0f0f0"/><rect x="20.8" y="1" width="4.6" height="4" fill="#f0f0f0"/><rect x="20.8" y="6" width="4.6" height="9.4" fill="#f0f0f0"/><rect x="20.8" y="16.4" width="4.6" height="5.2" fill="#f0f0f0"/><path d="M29.599999999999998 4.3999999999999995 L29.599999999999998 10.399999999999999 L23.400000000000002 19.4 L18.6 15 Z" fill="#7e7e7e"/><path d="M18.0 16.2 L22.0 20 L21.0 21.2 L16.8 17.4 Z" fill="#d8d8d8"/><path d="M16.400000000000002 18 L20.6 21.8 Q20.1 26.7 5.8 28.2 Q10.8 24 12.000000000000002 20.4 Q14.100000000000001 17.6 16.400000000000002 18 Z" fill="#2f7ed0"/><ellipse cx="16.200000000000003" cy="21.2" rx="1.6" ry="1.1" fill="#eaf2fb" transform="rotate(-40 16.200000000000003 21.2)"/></svg>
<span id="t34" class="t" style="left:917.4px;top:105.3px;font-size:12px;line-height:16px;color:#fff;letter-spacing:-0.49px;">Cell</span>
<span id="t35" class="t" style="left:906.0px;top:121.2px;font-size:12px;line-height:16px;color:#fff;letter-spacing:-0.28px;">Styles</span>
<svg class="a" style="left:938.3px;top:125.7px;" width="8" height="4.9" viewBox="0 0 8 4.9"><path d="M1 1 L4.0 3.9 L7 1" fill="none" stroke="#fff" stroke-width="1.55"/></svg>
<span id="t36" class="t" style="left:846.4px;top:140.2px;font-size:12px;line-height:16px;color:#fff;letter-spacing:-0.92px;">Styles</span>
<div class="sep" style="left:957px;top:68px;height:84px"></div>
<svg class="a" style="left:974px;top:72px;" width="27" height="28" viewBox="0 0 27 28"><rect x="0" y="0" width="15" height="6" fill="#9c9c9c"/><rect x="1.00" y="1.00" width="6.00" height="4.00" fill="#f0f0f0"/><rect x="8.00" y="1.00" width="6.00" height="4.00" fill="#f0f0f0"/><rect x="11" y="8" width="15" height="6" fill="#9c9c9c"/><rect x="12.00" y="9.00" width="6.00" height="4.00" fill="#b4c8de"/><rect x="19.00" y="9.00" width="6.00" height="4.00" fill="#b4c8de"/><rect x="0" y="16" width="15" height="11" fill="#9c9c9c"/><rect x="1.00" y="17.00" width="6.00" height="4.00" fill="#f0f0f0"/><rect x="1.00" y="22.00" width="6.00" height="4.00" fill="#f0f0f0"/><rect x="8.00" y="17.00" width="6.00" height="4.00" fill="#f0f0f0"/><rect x="8.00" y="22.00" width="6.00" height="4.00" fill="#f0f0f0"/><path d="M8 11 H2 M4.6 8.2 L1.6 11 L4.6 13.8" fill="none" stroke="#3c8de0" stroke-width="1.7"/></svg>
<span id="t37" class="t" style="left:972.7px;top:105.3px;font-size:12px;line-height:16px;color:#fff;letter-spacing:-0.38px;">Insert</span>
<svg class="a" style="left:982.4px;top:125.7px;" width="8" height="4.9" viewBox="0 0 8 4.9"><path d="M1 1 L4.0 3.9 L7 1" fill="none" stroke="#fff" stroke-width="1.55"/></svg>
<svg class="a" style="left:1015px;top:72px;" width="30" height="28" viewBox="0 0 30 28"><rect x="0" y="0" width="15" height="6" fill="#9c9c9c"/><rect x="1.00" y="1.00" width="6.00" height="4.00" fill="#f0f0f0"/><rect x="8.00" y="1.00" width="6.00" height="4.00" fill="#f0f0f0"/><rect x="6" y="8" width="12.5" height="6" fill="#9c9c9c"/><rect x="7.00" y="9.00" width="4.75" height="4.00" fill="#b4c8de"/><rect x="12.75" y="9.00" width="4.75" height="4.00" fill="#b4c8de"/><rect x="0" y="17" width="15" height="11" fill="#9c9c9c"/><rect x="1.00" y="18.00" width="6.00" height="4.00" fill="#f0f0f0"/><rect x="1.00" y="23.00" width="6.00" height="4.00" fill="#f0f0f0"/><rect x="8.00" y="18.00" width="6.00" height="4.00" fill="#f0f0f0"/><rect x="8.00" y="23.00" width="6.00" height="4.00" fill="#f0f0f0"/><path d="M15.4 6 Q20 9 29 18.4 M29 5.6 Q22 10 15 18.6" fill="none" stroke="#d9502c" stroke-width="1.9" stroke-linecap="round"/></svg>
<span id="t38" class="t" style="left:1012.5px;top:105.3px;font-size:12px;line-height:16px;color:#fff;letter-spacing:-0.58px;">Delete</span>
<svg class="a" style="left:1024px;top:125.7px;" width="8" height="4.9" viewBox="0 0 8 4.9"><path d="M1 1 L4.0 3.9 L7 1" fill="none" stroke="#fff" stroke-width="1.55"/></svg>
<svg class="a" style="left:1057px;top:71px;" width="28" height="31" viewBox="0 0 28 31"><path d="M.6 0 V5 M22.6 0 V5 M2.4 2.5 H21 M4.8 .3 L2.4 2.5 L4.8 4.7 M18.6 .3 L21 2.5 L18.6 4.7" fill="none" stroke="#3c8de0" stroke-width="1.1"/><rect x="0" y="6" width="27.6" height="20.8" fill="#9c9c9c"/><rect x="0.8" y="6.8" width="6.4" height="3.8" fill="#f0f0f0"/><rect x="0.8" y="11.6" width="6.4" height="9.2" fill="#f0f0f0"/><rect x="0.8" y="21.8" width="6.4" height="4.2" fill="#f0f0f0"/><rect x="8" y="6.8" width="7.2" height="3.8" fill="#f0f0f0"/><rect x="8" y="11.6" width="7.2" height="9.2" fill="#2f7ed0"/><rect x="8" y="21.8" width="7.2" height="4.2" fill="#f0f0f0"/><rect x="16" y="6.8" width="6.2" height="3.8" fill="#f0f0f0"/><rect x="16" y="11.6" width="6.2" height="9.2" fill="#f0f0f0"/><rect x="16" y="21.8" width="6.2" height="4.2" fill="#f0f0f0"/><rect x="23" y="6.8" width="4" height="3.8" fill="#f0f0f0"/><rect x="23" y="11.6" width="4" height="9.2" fill="#f0f0f0"/><rect x="23" y="21.8" width="4" height="4.2" fill="#f0f0f0"/><path d="M.8 26.8 H8 L6.4 30.4 H.8 Z M10 26.8 H18.4 L16.4 30.4 H10 Z" fill="#e8e8e8"/></svg>
<span id="t39" class="t" style="left:1052.5px;top:105.3px;font-size:12px;line-height:16px;color:#fff;letter-spacing:-0.18px;">Format</span>
<svg class="a" style="left:1066px;top:125.7px;" width="8" height="4.9" viewBox="0 0 8 4.9"><path d="M1 1 L4.0 3.9 L7 1" fill="none" stroke="#fff" stroke-width="1.55"/></svg>
<span id="t40" class="t" style="left:1017.5px;top:140.2px;font-size:12px;line-height:16px;color:#fff;letter-spacing:-0.90px;">Cells</span>
<div class="sep" style="left:1100px;top:68px;height:84px"></div>
<svg class="a" style="left:1111.5px;top:70px;" width="16" height="16" viewBox="0 0 16 16"><path d="M14.6 3.6 V1 H1.6 L8 7.8 L1.6 14.6 H14.6 V12" fill="none" stroke="#f0f0f0" stroke-width="2" stroke-linejoin="miter"/></svg>
<svg class="a" style="left:1133px;top:76px;" width="8" height="4.9" viewBox="0 0 8 4.9"><path d="M1 1 L4.0 3.9 L7 1" fill="none" stroke="#fff" stroke-width="1.55"/></svg>
<svg class="a" style="left:1113px;top:93px;" width="14" height="16" viewBox="0 0 14 16"><rect x=".5" y=".5" width="13" height="15" fill="#f0f0f0"/><rect x=".5" y=".5" width="13" height="4" fill="#8a8a8a"/>
<path d="M7 6 V13 M3.4 9.6 L7 13.2 L10.6 9.6" fill="none" stroke="#2b7cd3" stroke-width="2.1"/></svg>
<svg class="a" style="left:1131.7px;top:99px;" width="8" height="4.9" viewBox="0 0 8 4.9"><path d="M1 1 L4.0 3.9 L7 1" fill="none" stroke="#fff" stroke-width="1.55"/></svg>
<svg class="a" style="left:1113px;top:117px;" width="14" height="14" viewBox="0 0 14 14"><g transform="rotate(-40 7 7)"><rect x="-1.5" y="3.5" width="15" height="7" rx="1.2" fill="#e8668a"/><rect x="-1.5" y="3.5" width="4.6" height="7" rx="1.2" fill="#f3a9bd"/></g></svg>
<svg class="a" style="left:1131.7px;top:122px;" width="8" height="4.9" viewBox="0 0 8 4.9"><path d="M1 1 L4.0 3.9 L7 1" fill="none" stroke="#fff" stroke-width="1.55"/></svg>
<svg class="a" style="left:1152.6px;top:72.6px;" width="31" height="28" viewBox="0 0 31 28"><text x="0" y="12" font-family="Liberation Sans, sans-serif" font-size="16.5" fill="#2f7ed0" stroke="#2f7ed0" stroke-width=".5">A</text>
<text x="1" y="26.4" font-family="Liberation Sans, sans-serif" font-size="16" fill="#9a5ad0" stroke="#9a5ad0" stroke-width=".5">Z</text>
<path d="M12.4 7.4 H30 L23.2 15.6 H19.6 Z" fill="#a6a6a6"/><path d="M19.6 15 H22.6 V22 H19.6 Z" fill="#dcdcdc"/></svg>
<span id="t41" class="t" style="left:1151.4px;top:105.3px;font-size:12px;line-height:16px;color:#fff;letter-spacing:-0.11px;">Sort &amp;</span>
<span id="t42" class="t" style="left:1149.6px;top:121.2px;font-size:12px;line-height:16px;color:#fff;">Filter</span>
<svg class="a" style="left:1177px;top:125.7px;" width="8" height="4.9" viewBox="0 0 8 4.9"><path d="M1 1 L4.0 3.9 L7 1" fill="none" stroke="#fff" stroke-width="1.55"/></svg>
<svg class="a" style="left:1197px;top:72px;" width="29" height="29" viewBox="0 0 29 29"><circle cx="18.5" cy="10" r="8.2" fill="#f3f3f3" stroke="#3c8de0" stroke-width="2.6"/><path d="M12.2 16.4 L1.5 26.5" stroke="#3c8de0" stroke-width="3.2" stroke-linecap="round"/></svg>
<span id="t43" class="t" style="left:1194.0px;top:105.3px;font-size:12px;line-height:16px;color:#fff;letter-spacing:0.22px;">Find &amp;</span>
<span id="t44" class="t" style="left:1191.0px;top:121.2px;font-size:12px;line-height:16px;color:#fff;letter-spacing:-0.17px;">Select</span>
<svg class="a" style="left:1224.5px;top:125.7px;" width="8" height="4.9" viewBox="0 0 8 4.9"><path d="M1 1 L4.0 3.9 L7 1" fill="none" stroke="#fff" stroke-width="1.55"/></svg>
<span id="t45" class="t" style="left:1153.4px;top:140.2px;font-size:12px;line-height:16px;color:#fff;">Editing</span>
<div class="sep" style="left:1243px;top:68px;height:84px"></div>
<svg class="a" style="left:1266px;top:77px;" width="16" height="16" viewBox="0 0 16 16"><defs><radialGradient id="ao"><stop offset="0" stop-color="#ff9a00"/><stop offset=".6" stop-color="#f08c00"/><stop offset="1" stop-color="#f08c00" stop-opacity="0"/></radialGradient></defs><circle cx="8" cy="8" r="6.5" fill="url(#ao)"/></svg>
<span id="t46" class="t" style="left:1254.5px;top:104.8px;font-size:12px;line-height:16px;color:#fff;letter-spacing:0.13px;">Add-ins</span>
<span id="t47" class="t" style="left:1254.5px;top:140.2px;font-size:12px;line-height:16px;color:#fff;letter-spacing:0.13px;">Add-ins</span>
<div class="sep" style="left:1306px;top:68px;height:84px"></div>
<svg class="a" style="left:1346.5px;top:146px;" width="12" height="8" viewBox="0 0 12 8"><path d="M1 6.4 L6 1.4 L11 6.4" fill="none" stroke="#e0e0e0" stroke-width="1.3"/></svg>
<div class="a" style="left:0px;top:157px;width:1366px;height:46px;background:#262626;"></div>
<div class="a" style="left:5px;top:167px;width:116px;height:26px;background:#373737;border:1px solid #494949;"></div>
<span id="t48" class="t" style="left:12.4px;top:173.0px;font-size:12px;line-height:16px;color:#fff;letter-spacing:0.19px;">O3</span>
<svg class="a" style="left:107px;top:178px;" width="7" height="3.6" viewBox="0 0 7 3.6"><path d="M0 0 H7 L3.5 3.6 Z" fill="#f0f0f0"/></svg>
<div class="a" style="left:135px;top:176px;width:2px;height:2px;background:#e0e0e0;"></div>
<div class="a" style="left:135px;top:180px;width:2px;height:2px;background:#e0e0e0;"></div>
<div class="a" style="left:135px;top:184px;width:2px;height:2px;background:#e0e0e0;"></div>
<div class="a" style="left:151px;top:167px;width:110px;height:26px;background:#373737;border:1px solid #494949;"></div>
<svg class="a" style="left:164.5px;top:174.5px;" width="11" height="11" viewBox="0 0 11 11"><path d="M.8 .8 L10.2 10.2 M10.2 .8 L.8 10.2" stroke="#707070" stroke-width="1.9"/></svg>
<svg class="a" style="left:200px;top:174.5px;" width="14" height="11" viewBox="0 0 14 11"><path d="M1 6 L5 10 L13 1" fill="none" stroke="#707070" stroke-width="2.2"/></svg>
<span id="t49" class="t" style="left:236.5px;top:172.4px;font-size:14px;line-height:16px;color:#fff;font-family:'Liberation Serif',serif;font-style:italic;font-weight:700;">f</span>
<span id="t50" class="t" style="left:241.5px;top:174.2px;font-size:9.5px;line-height:16px;color:#fff;font-family:'Liberation Serif',serif;font-style:italic;font-weight:700;">x</span>
<div class="a" style="left:264px;top:167px;width:1097px;height:26px;background:#373737;border:1px solid #494949;"></div>
<span id="t51" class="t" style="left:276.3px;top:173.0px;font-size:12px;line-height:16px;color:#fff;letter-spacing:0.32px;">=COUNT(I:I,C:C)</span>
<svg class="a" style="left:1348px;top:176px;" width="9" height="6" viewBox="0 0 9 6"><path d="M1 1 L4.5 4.6 L8 1" fill="none" stroke="#f0f0f0" stroke-width="2"/></svg>
<div class="a" style="left:0px;top:203px;width:1366px;height:476px;background:#262626;"></div>
<div class="a" style="left:26px;top:222px;width:1318px;height:457px;background:#fff;"></div>
<svg class="a" style="left:9px;top:208px;" width="14" height="12" viewBox="0 0 14 12"><path d="M13 .5 V11.5 H1 Z" fill="#5e5e5e"/></svg>
<div class="a" style="left:25px;top:204px;width:1px;height:18px;background:#4a4a4a;"></div>
<div class="a" style="left:176px;top:204px;width:1px;height:18px;background:#4a4a4a;"></div>
<span class="t" style="left:26px;width:150px;top:204px;line-height:18px;text-align:center;font-size:12px;color:#e6e6e6">H</span>
<div class="a" style="left:271px;top:204px;width:1px;height:18px;background:#4a4a4a;"></div>
<span class="t" style="left:177px;width:94px;top:204px;line-height:18px;text-align:center;font-size:12px;color:#e6e6e6">I</span>
<div class="a" style="left:363px;top:204px;width:1px;height:18px;background:#4a4a4a;"></div>
<span class="t" style="left:272px;width:91px;top:204px;line-height:18px;text-align:center;font-size:12px;color:#e6e6e6">J</span>
<div class="a" style="left:521px;top:204px;width:1px;height:18px;background:#4a4a4a;"></div>
<span class="t" style="left:364px;width:157px;top:204px;line-height:18px;text-align:center;font-size:12px;color:#e6e6e6">K</span>
<div class="a" style="left:681px;top:204px;width:1px;height:18px;background:#4a4a4a;"></div>
<span class="t" style="left:522px;width:159px;top:204px;line-height:18px;text-align:center;font-size:12px;color:#e6e6e6">L</span>
<div class="a" style="left:838px;top:204px;width:1px;height:18px;background:#4a4a4a;"></div>
<span class="t" style="left:682px;width:156px;top:204px;line-height:18px;text-align:center;font-size:12px;color:#e6e6e6">M</span>
<div class="a" style="left:1062px;top:204px;width:1px;height:18px;background:#4a4a4a;"></div>
<span class="t" style="left:839px;width:223px;top:204px;line-height:18px;text-align:center;font-size:12px;color:#e6e6e6">N</span>
<div class="a" style="left:1062px;top:203px;width:225px;height:20px;background:#666;border-bottom:2px solid #1a7340;border-left:1px solid #c4c4c4;border-right:1px solid #c4c4c4;"></div>
<span class="t" style="left:1063px;width:223px;top:204px;line-height:18px;text-align:center;font-size:12px;color:#e6e6e6">O</span>
<span class="t" style="left:0;width:25px;top:225px;line-height:18px;text-align:center;font-size:12px;color:#e0e0e0">1</span>
<div class="a" style="left:0px;top:242px;width:25px;height:1px;background:#3e3e3e;"></div>
<span class="t" style="left:0;width:25px;top:245px;line-height:18px;text-align:center;font-size:12px;color:#e0e0e0">2</span>
<div class="a" style="left:0px;top:262px;width:25px;height:1px;background:#3e3e3e;"></div>
<div class="a" style="left:0px;top:262px;width:26px;height:21px;background:#666;border-right:2px solid #1a7340;border-top:1px solid #9a9a9a;border-bottom:1px solid #c4c4c4;"></div>
<span class="t" style="left:0;width:25px;top:265px;line-height:18px;text-align:center;font-size:12px;color:#e0e0e0">3</span>
<div class="a" style="left:0px;top:282px;width:25px;height:1px;background:#3e3e3e;"></div>
<span class="t" style="left:0;width:25px;top:285px;line-height:18px;text-align:center;font-size:12px;color:#e0e0e0">4</span>
<div class="a" style="left:0px;top:302px;width:25px;height:1px;background:#3e3e3e;"></div>
<span class="t" style="left:0;width:25px;top:305px;line-height:18px;text-align:center;font-size:12px;color:#e0e0e0">5</span>
<div class="a" style="left:0px;top:322px;width:25px;height:1px;background:#3e3e3e;"></div>
<span class="t" style="left:0;width:25px;top:325px;line-height:18px;text-align:center;font-size:12px;color:#e0e0e0">6</span>
<div class="a" style="left:0px;top:342px;width:25px;height:1px;background:#3e3e3e;"></div>
<span class="t" style="left:0;width:25px;top:345px;line-height:18px;text-align:center;font-size:12px;color:#e0e0e0">7</span>
<div class="a" style="left:0px;top:362px;width:25px;height:1px;background:#3e3e3e;"></div>
<span class="t" style="left:0;width:25px;top:365px;line-height:18px;text-align:center;font-size:12px;color:#e0e0e0">8</span>
<div class="a" style="left:0px;top:382px;width:25px;height:1px;background:#3e3e3e;"></div>
<span class="t" style="left:0;width:25px;top:385px;line-height:18px;text-align:center;font-size:12px;color:#e0e0e0">9</span>
<div class="a" style="left:0px;top:402px;width:25px;height:1px;background:#3e3e3e;"></div>
<span class="t" style="left:0;width:25px;top:405px;line-height:18px;text-align:center;font-size:12px;color:#e0e0e0">10</span>
<div class="a" style="left:0px;top:422px;width:25px;height:1px;background:#3e3e3e;"></div>
<span class="t" style="left:0;width:25px;top:425px;line-height:18px;text-align:center;font-size:12px;color:#e0e0e0">11</span>
<div class="a" style="left:0px;top:442px;width:25px;height:1px;background:#3e3e3e;"></div>
<span class="t" style="left:0;width:25px;top:445px;line-height:18px;text-align:center;font-size:12px;color:#e0e0e0">12</span>
<div class="a" style="left:0px;top:462px;width:25px;height:1px;background:#3e3e3e;"></div>
<span class="t" style="left:0;width:25px;top:465px;line-height:18px;text-align:center;font-size:12px;color:#e0e0e0">13</span>
<div class="a" style="left:0px;top:482px;width:25px;height:1px;background:#3e3e3e;"></div>
<span class="t" style="left:0;width:25px;top:485px;line-height:18px;text-align:center;font-size:12px;color:#e0e0e0">14</span>
<div class="a" style="left:0px;top:502px;width:25px;height:1px;background:#3e3e3e;"></div>
<span class="t" style="left:0;width:25px;top:505px;line-height:18px;text-align:center;font-size:12px;color:#e0e0e0">15</span>
<div class="a" style="left:0px;top:522px;width:25px;height:1px;background:#3e3e3e;"></div>
<span class="t" style="left:0;width:25px;top:525px;line-height:18px;text-align:center;font-size:12px;color:#e0e0e0">16</span>
<div class="a" style="left:0px;top:542px;width:25px;height:1px;background:#3e3e3e;"></div>
<span class="t" style="left:0;width:25px;top:545px;line-height:18px;text-align:center;font-size:12px;color:#e0e0e0">17</span>
<div class="a" style="left:0px;top:562px;width:25px;height:1px;background:#3e3e3e;"></div>
<span class="t" style="left:0;width:25px;top:565px;line-height:18px;text-align:center;font-size:12px;color:#e0e0e0">18</span>
<div class="a" style="left:0px;top:582px;width:25px;height:1px;background:#3e3e3e;"></div>
<span class="t" style="left:0;width:25px;top:585px;line-height:18px;text-align:center;font-size:12px;color:#e0e0e0">19</span>
<div class="a" style="left:0px;top:602px;width:25px;height:1px;background:#3e3e3e;"></div>
<span class="t" style="left:0;width:25px;top:605px;line-height:18px;text-align:center;font-size:12px;color:#e0e0e0">20</span>
<div class="a" style="left:0px;top:622px;width:25px;height:1px;background:#3e3e3e;"></div>
<span class="t" style="left:0;width:25px;top:625px;line-height:18px;text-align:center;font-size:12px;color:#e0e0e0">21</span>
<div class="a" style="left:0px;top:642px;width:25px;height:1px;background:#3e3e3e;"></div>
<span class="t" style="left:0;width:25px;top:645px;line-height:18px;text-align:center;font-size:12px;color:#e0e0e0">22</span>
<div class="a" style="left:0px;top:662px;width:25px;height:1px;background:#3e3e3e;"></div>
<span class="t" style="left:0;width:25px;top:665px;line-height:18px;text-align:center;font-size:12px;color:#e0e0e0">23</span>
<svg class="a" style="left:0px;top:0px;pointer-events:none;" width="1366" height="768" viewBox="0 0 1366 768"><g fill="#d4d4d4"><rect x="26" y="242" width="1318" height="1"/><rect x="26" y="262" width="1318" height="1"/><rect x="26" y="282" width="1318" height="1"/><rect x="26" y="302" width="1318" height="1"/><rect x="26" y="322" width="1318" height="1"/><rect x="26" y="342" width="1318" height="1"/><rect x="26" y="362" width="1318" height="1"/><rect x="26" y="382" width="1318" height="1"/><rect x="26" y="402" width="1318" height="1"/><rect x="26" y="422" width="1318" height="1"/><rect x="26" y="442" width="1318" height="1"/><rect x="26" y="462" width="1318" height="1"/><rect x="26" y="482" width="1318" height="1"/><rect x="26" y="502" width="1318" height="1"/><rect x="26" y="522" width="1318" height="1"/><rect x="26" y="542" width="1318" height="1"/><rect x="26" y="562" width="1318" height="1"/><rect x="26" y="582" width="1318" height="1"/><rect x="26" y="602" width="1318" height="1"/><rect x="26" y="622" width="1318" height="1"/><rect x="26" y="642" width="1318" height="1"/><rect x="26" y="662" width="1318" height="1"/><rect x="176" y="222" width="1" height="457"/><rect x="271" y="222" width="1" height="457"/><rect x="363" y="222" width="1" height="457"/><rect x="521" y="222" width="1" height="457"/><rect x="681" y="222" width="1" height="457"/><rect x="838" y="222" width="1" height="457"/><rect x="1062" y="222" width="1" height="457"/><rect x="1286" y="222" width="1" height="457"/></g></svg>
<span class="c" style="left:28px;top:222px;width:131px;font-size:13.5px;letter-spacing:.3px;line-height:22px">new_cases_smoothed</span>
<div class="fb" style="left:159px;top:224px"><svg width="7" height="4" viewBox="0 0 7 4"><path d="M0 0 H7 L3.5 3.7 Z" fill="#5c5c5c"/></svg></div>
<span class="c" style="left:179px;top:222px;width:75px;font-size:13.5px;letter-spacing:.3px;line-height:22px">total_deaths</span>
<div class="fb" style="left:254px;top:224px"><svg width="7" height="4" viewBox="0 0 7 4"><path d="M0 0 H7 L3.5 3.7 Z" fill="#5c5c5c"/></svg></div>
<span class="c" style="left:274px;top:222px;width:72px;font-size:13.5px;letter-spacing:.3px;line-height:22px">new_deaths</span>
<div class="fb" style="left:346px;top:224px"><svg width="7" height="4" viewBox="0 0 7 4"><path d="M0 0 H7 L3.5 3.7 Z" fill="#5c5c5c"/></svg></div>
<span class="c" style="left:366px;top:222px;width:138px;font-size:13.5px;letter-spacing:.3px;line-height:22px">new_deaths_smoothed</span>
<div class="fb" style="left:504px;top:224px"><svg width="7" height="4" viewBox="0 0 7 4"><path d="M0 0 H7 L3.5 3.7 Z" fill="#5c5c5c"/></svg></div>
<span class="c" style="left:524px;top:222px;width:140px;font-size:13.5px;letter-spacing:.3px;line-height:22px">total_cases_per_million</span>
<div class="fb" style="left:664px;top:224px"><svg width="7" height="4" viewBox="0 0 7 4"><path d="M0 0 H7 L3.5 3.7 Z" fill="#5c5c5c"/></svg></div>
<span class="c" style="left:684px;top:222px;width:137px;font-size:13.5px;letter-spacing:.3px;line-height:22px">new_cases_per_million</span>
<div class="fb" style="left:821px;top:224px"><svg width="7" height="4" viewBox="0 0 7 4"><path d="M0 0 H7 L3.5 3.7 Z" fill="#5c5c5c"/></svg></div>
<span class="c" style="left:841px;top:222px;width:204px;font-size:13.5px;letter-spacing:.3px;line-height:22px">new_cases_smoothed_per_million</span>
<div class="fb" style="left:1045px;top:224px"><svg width="7" height="4" viewBox="0 0 7 4"><path d="M0 0 H7 L3.5 3.7 Z" fill="#5c5c5c"/></svg></div>
<div class="fb" style="left:1269px;top:224px"><svg width="7" height="4" viewBox="0 0 7 4"><path d="M0 0 H7 L3.5 3.7 Z" fill="#5c5c5c"/></svg></div>
<span class="c" style="left:1289px;top:222px;width:57px;font-size:13.5px;letter-spacing:.3px;line-height:22px">total_deaths_per_million</span>
<span class="c r" style="left:26px;top:342px;width:148.5px;height:20px;line-height:24px;letter-spacing:.15px">0.143</span>
<span class="c r" style="left:26px;top:362px;width:148.5px;height:20px;line-height:24px;letter-spacing:.15px">0.143</span>
<span class="c r" style="left:26px;top:382px;width:148.5px;height:20px;line-height:24px;letter-spacing:.15px">0</span>
<span class="c r" style="left:26px;top:402px;width:148.5px;height:20px;line-height:24px;letter-spacing:.15px">0.143</span>
<span class="c r" style="left:26px;top:422px;width:148.5px;height:20px;line-height:24px;letter-spacing:.15px">0.429</span>
<span class="c r" style="left:26px;top:442px;width:148.5px;height:20px;line-height:24px;letter-spacing:.15px">0.429</span>
<span class="c r" style="left:26px;top:462px;width:148.5px;height:20px;line-height:24px;letter-spacing:.15px">0.429</span>
<span class="c r" style="left:26px;top:482px;width:148.5px;height:20px;line-height:24px;letter-spacing:.15px">0.429</span>
<span class="c r" style="left:26px;top:502px;width:148.5px;height:20px;line-height:24px;letter-spacing:.15px">0.571</span>
<span class="c r" style="left:26px;top:522px;width:148.5px;height:20px;line-height:24px;letter-spacing:.15px">0.857</span>
<span class="c r" style="left:26px;top:542px;width:148.5px;height:20px;line-height:24px;letter-spacing:.15px">0.857</span>
<span class="c r" style="left:26px;top:562px;width:148.5px;height:20px;line-height:24px;letter-spacing:.15px">1</span>
<span class="c r" style="left:26px;top:582px;width:148.5px;height:20px;line-height:24px;letter-spacing:.15px">1.143</span>
<span class="c r" style="left:26px;top:602px;width:148.5px;height:20px;line-height:24px;letter-spacing:.15px">1.286</span>
<span class="c r" style="left:26px;top:622px;width:148.5px;height:20px;line-height:24px;letter-spacing:.15px">1.571</span>
<span class="c r" style="left:26px;top:642px;width:148.5px;height:20px;line-height:24px;letter-spacing:.15px">1.571</span>
<span class="c r" style="left:26px;top:662px;width:148.5px;height:17px;line-height:24px;letter-spacing:.15px">1.571</span>
<span class="c r" style="left:364px;top:342px;width:155.5px;height:20px;line-height:24px;letter-spacing:.15px">0</span>
<span class="c r" style="left:364px;top:362px;width:155.5px;height:20px;line-height:24px;letter-spacing:.15px">0</span>
<span class="c r" style="left:364px;top:382px;width:155.5px;height:20px;line-height:24px;letter-spacing:.15px">0</span>
<span class="c r" style="left:364px;top:402px;width:155.5px;height:20px;line-height:24px;letter-spacing:.15px">0</span>
<span class="c r" style="left:364px;top:422px;width:155.5px;height:20px;line-height:24px;letter-spacing:.15px">0</span>
<span class="c r" style="left:364px;top:442px;width:155.5px;height:20px;line-height:24px;letter-spacing:.15px">0</span>
<span class="c r" style="left:364px;top:462px;width:155.5px;height:20px;line-height:24px;letter-spacing:.15px">0</span>
<span class="c r" style="left:364px;top:482px;width:155.5px;height:20px;line-height:24px;letter-spacing:.15px">0</span>
<span class="c r" style="left:364px;top:502px;width:155.5px;height:20px;line-height:24px;letter-spacing:.15px">0</span>
<span class="c r" style="left:364px;top:522px;width:155.5px;height:20px;line-height:24px;letter-spacing:.15px">0</span>
<span class="c r" style="left:364px;top:542px;width:155.5px;height:20px;line-height:24px;letter-spacing:.15px">0</span>
<span class="c r" style="left:364px;top:562px;width:155.5px;height:20px;line-height:24px;letter-spacing:.15px">0</span>
<span class="c r" style="left:364px;top:582px;width:155.5px;height:20px;line-height:24px;letter-spacing:.15px">0</span>
<span class="c r" style="left:364px;top:602px;width:155.5px;height:20px;line-height:24px;letter-spacing:.15px">0</span>
<span class="c r" style="left:364px;top:622px;width:155.5px;height:20px;line-height:24px;letter-spacing:.15px">0</span>
<span class="c r" style="left:364px;top:642px;width:155.5px;height:20px;line-height:24px;letter-spacing:.15px">0</span>
<span class="c r" style="left:364px;top:662px;width:155.5px;height:17px;line-height:24px;letter-spacing:.15px">0</span>
<span class="c r" style="left:522px;top:242px;width:157.5px;height:20px;line-height:24px;letter-spacing:.15px">0.026</span>
<span class="c r" style="left:522px;top:262px;width:157.5px;height:20px;line-height:24px;letter-spacing:.15px">0.026</span>
<span class="c r" style="left:522px;top:282px;width:157.5px;height:20px;line-height:24px;letter-spacing:.15px">0.026</span>
<span class="c r" style="left:522px;top:302px;width:157.5px;height:20px;line-height:24px;letter-spacing:.15px">0.026</span>
<span class="c r" style="left:522px;top:322px;width:157.5px;height:20px;line-height:24px;letter-spacing:.15px">0.026</span>
<span class="c r" style="left:522px;top:342px;width:157.5px;height:20px;line-height:24px;letter-spacing:.15px">0.026</span>
<span class="c r" style="left:522px;top:362px;width:157.5px;height:20px;line-height:24px;letter-spacing:.15px">0.026</span>
<span class="c r" style="left:522px;top:382px;width:157.5px;height:20px;line-height:24px;letter-spacing:.15px">0.026</span>
<span class="c r" style="left:522px;top:402px;width:157.5px;height:20px;line-height:24px;letter-spacing:.15px">0.051</span>
<span class="c r" style="left:522px;top:422px;width:157.5px;height:20px;line-height:24px;letter-spacing:.15px">0.103</span>
<span class="c r" style="left:522px;top:442px;width:157.5px;height:20px;line-height:24px;letter-spacing:.15px">0.103</span>
<span class="c r" style="left:522px;top:462px;width:157.5px;height:20px;line-height:24px;letter-spacing:.15px">0.103</span>
<span class="c r" style="left:522px;top:482px;width:157.5px;height:20px;line-height:24px;letter-spacing:.15px">0.103</span>
<span class="c r" style="left:522px;top:502px;width:157.5px;height:20px;line-height:24px;letter-spacing:.15px">0.128</span>
<span class="c r" style="left:522px;top:522px;width:157.5px;height:20px;line-height:24px;letter-spacing:.15px">0.18</span>
<span class="c r" style="left:522px;top:542px;width:157.5px;height:20px;line-height:24px;letter-spacing:.15px">0.206</span>
<span class="c r" style="left:522px;top:562px;width:157.5px;height:20px;line-height:24px;letter-spacing:.15px">0.283</span>
<span class="c r" style="left:522px;top:582px;width:157.5px;height:20px;line-height:24px;letter-spacing:.15px">0.308</span>
<span class="c r" style="left:522px;top:602px;width:157.5px;height:20px;line-height:24px;letter-spacing:.15px">0.334</span>
<span class="c r" style="left:522px;top:622px;width:157.5px;height:20px;line-height:24px;letter-spacing:.15px">0.385</span>
<span class="c r" style="left:522px;top:642px;width:157.5px;height:20px;line-height:24px;letter-spacing:.15px">0.411</span>
<span class="c r" style="left:522px;top:662px;width:157.5px;height:17px;line-height:24px;letter-spacing:.15px">0.462</span>
<span class="c r" style="left:682px;top:242px;width:154.5px;height:20px;line-height:24px;letter-spacing:.15px">0.026</span>
<span class="c r" style="left:682px;top:262px;width:154.5px;height:20px;line-height:24px;letter-spacing:.15px">0</span>
<span class="c r" style="left:682px;top:282px;width:154.5px;height:20px;line-height:24px;letter-spacing:.15px">0</span>
<span class="c r" style="left:682px;top:302px;width:154.5px;height:20px;line-height:24px;letter-spacing:.15px">0</span>
<span class="c r" style="left:682px;top:322px;width:154.5px;height:20px;line-height:24px;letter-spacing:.15px">0</span>
<span class="c r" style="left:682px;top:342px;width:154.5px;height:20px;line-height:24px;letter-spacing:.15px">0</span>
<span class="c r" style="left:682px;top:362px;width:154.5px;height:20px;line-height:24px;letter-spacing:.15px">0</span>
<span class="c r" style="left:682px;top:382px;width:154.5px;height:20px;line-height:24px;letter-spacing:.15px">0</span>
<span class="c r" style="left:682px;top:402px;width:154.5px;height:20px;line-height:24px;letter-spacing:.15px">0.026</span>
<span class="c r" style="left:682px;top:422px;width:154.5px;height:20px;line-height:24px;letter-spacing:.15px">0.051</span>
<span class="c r" style="left:682px;top:442px;width:154.5px;height:20px;line-height:24px;letter-spacing:.15px">0</span>
<span class="c r" style="left:682px;top:462px;width:154.5px;height:20px;line-height:24px;letter-spacing:.15px">0</span>
<span class="c r" style="left:682px;top:482px;width:154.5px;height:20px;line-height:24px;letter-spacing:.15px">0</span>
<span class="c r" style="left:682px;top:502px;width:154.5px;height:20px;line-height:24px;letter-spacing:.15px">0.026</span>
<span class="c r" style="left:682px;top:522px;width:154.5px;height:20px;line-height:24px;letter-spacing:.15px">0.051</span>
<span class="c r" style="left:682px;top:542px;width:154.5px;height:20px;line-height:24px;letter-spacing:.15px">0.026</span>
<span class="c r" style="left:682px;top:562px;width:154.5px;height:20px;line-height:24px;letter-spacing:.15px">0.077</span>
<span class="c r" style="left:682px;top:582px;width:154.5px;height:20px;line-height:24px;letter-spacing:.15px">0.026</span>
<span class="c r" style="left:682px;top:602px;width:154.5px;height:20px;line-height:24px;letter-spacing:.15px">0.026</span>
<span class="c r" style="left:682px;top:622px;width:154.5px;height:20px;line-height:24px;letter-spacing:.15px">0.051</span>
<span class="c r" style="left:682px;top:642px;width:154.5px;height:20px;line-height:24px;letter-spacing:.15px">0.026</span>
<span class="c r" style="left:682px;top:662px;width:154.5px;height:17px;line-height:24px;letter-spacing:.15px">0.051</span>
<span class="c r" style="left:839px;top:342px;width:221.5px;height:20px;line-height:24px;letter-spacing:.15px">0.004</span>
<span class="c r" style="left:839px;top:362px;width:221.5px;height:20px;line-height:24px;letter-spacing:.15px">0.004</span>
<span class="c r" style="left:839px;top:382px;width:221.5px;height:20px;line-height:24px;letter-spacing:.15px">0</span>
<span class="c r" style="left:839px;top:402px;width:221.5px;height:20px;line-height:24px;letter-spacing:.15px">0.004</span>
<span class="c r" style="left:839px;top:422px;width:221.5px;height:20px;line-height:24px;letter-spacing:.15px">0.011</span>
<span class="c r" style="left:839px;top:442px;width:221.5px;height:20px;line-height:24px;letter-spacing:.15px">0.011</span>
<span class="c r" style="left:839px;top:462px;width:221.5px;height:20px;line-height:24px;letter-spacing:.15px">0.011</span>
<span class="c r" style="left:839px;top:482px;width:221.5px;height:20px;line-height:24px;letter-spacing:.15px">0.011</span>
<span class="c r" style="left:839px;top:502px;width:221.5px;height:20px;line-height:24px;letter-spacing:.15px">0.015</span>
<span class="c r" style="left:839px;top:522px;width:221.5px;height:20px;line-height:24px;letter-spacing:.15px">0.022</span>
<span class="c r" style="left:839px;top:542px;width:221.5px;height:20px;line-height:24px;letter-spacing:.15px">0.022</span>
<span class="c r" style="left:839px;top:562px;width:221.5px;height:20px;line-height:24px;letter-spacing:.15px">0.026</span>
<span class="c r" style="left:839px;top:582px;width:221.5px;height:20px;line-height:24px;letter-spacing:.15px">0.029</span>
<span class="c r" style="left:839px;top:602px;width:221.5px;height:20px;line-height:24px;letter-spacing:.15px">0.033</span>
<span class="c r" style="left:839px;top:622px;width:221.5px;height:20px;line-height:24px;letter-spacing:.15px">0.04</span>
<span class="c r" style="left:839px;top:642px;width:221.5px;height:20px;line-height:24px;letter-spacing:.15px">0.04</span>
<span class="c r" style="left:839px;top:662px;width:221.5px;height:17px;line-height:24px;letter-spacing:.15px">0.04</span>
<span class="c r" style="left:1063px;top:262px;width:221.5px;line-height:24px;letter-spacing:.15px">73408</span>
<div class="a" style="left:1061px;top:261px;width:227px;height:23px;border:2px solid #1a7340;"></div>
<div class="a" style="left:1283px;top:279px;width:7px;height:7px;background:#1a7340;border:1px solid #fff;"></div>
<div class="a" style="left:1345px;top:203px;width:21px;height:476px;background:#262626;"></div>
<div class="a" style="left:1348px;top:205px;width:15px;height:474px;background:#0a0a0a;"></div>
<div class="a" style="left:1348px;top:205px;width:15px;height:15px;background:#363636;border:1px solid #626262;"></div>
<svg class="a" style="left:1351px;top:209px;" width="9" height="6" viewBox="0 0 9 6"><path d="M0 5.5 L4.5 .5 L9 5.5 Z" fill="#f0f0f0"/></svg>
<div class="a" style="left:1348px;top:220px;width:15px;height:16px;background:#363636;border:1px solid #626262;"></div>
<div class="a" style="left:1348px;top:664px;width:15px;height:15px;background:#363636;border:1px solid #626262;"></div>
<svg class="a" style="left:1351px;top:669px;" width="9" height="6" viewBox="0 0 9 6"><path d="M0 .5 L4.5 5.5 L9 .5 Z" fill="#f0f0f0"/></svg>
<div class="a" style="left:0px;top:679px;width:1366px;height:27px;background:#262626;"></div>
<svg class="a" style="left:27px;top:688px;" width="6" height="8" viewBox="0 0 6 8"><path d="M5.5 .5 V7.5 L.5 4 Z" fill="#b0b0b0"/></svg>
<svg class="a" style="left:55px;top:688px;" width="6" height="8" viewBox="0 0 6 8"><path d="M.5 .5 V7.5 L5.5 4 Z" fill="#b0b0b0"/></svg>
<div class="a" style="left:100px;top:679px;width:102px;height:24px;background:#fff;border-bottom:2px solid #1a7340;"></div>
<span id="t52" class="t" style="left:112.5px;top:683.8px;font-size:12.5px;line-height:16px;color:#1a7340;font-weight:700;letter-spacing:0.11px;">CovidDeaths</span>
<svg class="a" style="left:234.5px;top:683.3px;" width="17" height="17" viewBox="0 0 17 17"><circle cx="8.5" cy="8.5" r="7.2" fill="none" stroke="#f0f0f0" stroke-width="1.5"/><path d="M8.5 4.4 V12.6 M4.4 8.5 H12.6" stroke="#f0f0f0" stroke-width="2"/></svg>
<div class="a" style="left:818px;top:687px;width:2px;height:2px;background:#e0e0e0;"></div>
<div class="a" style="left:818px;top:691px;width:2px;height:2px;background:#e0e0e0;"></div>
<div class="a" style="left:818px;top:695px;width:2px;height:2px;background:#e0e0e0;"></div>
<div class="a" style="left:836px;top:685px;width:509px;height:15px;background:#0a0a0a;"></div>
<div class="a" style="left:836px;top:685px;width:15px;height:15px;background:#363636;border:1px solid #626262;"></div>
<svg class="a" style="left:841px;top:688px;" width="6" height="9" viewBox="0 0 6 9"><path d="M5.5 .5 V8.5 L.5 4.5 Z" fill="#f0f0f0"/></svg>
<div class="a" style="left:1330px;top:685px;width:15px;height:15px;background:#363636;border:1px solid #626262;"></div>
<svg class="a" style="left:1335px;top:688px;" width="6" height="9" viewBox="0 0 6 9"><path d="M.5 .5 V8.5 L5.5 4.5 Z" fill="#f0f0f0"/></svg>
<div class="a" style="left:975px;top:685px;width:124px;height:15px;background:#363636;border:1px solid #6a6a6a;"></div>
<div class="a" style="left:0px;top:706px;width:1366px;height:1px;background:#4a4a4a;"></div>
<div class="a" style="left:0px;top:707px;width:1366px;height:21px;background:#262626;"></div>
<span id="t53" class="t" style="left:12.4px;top:709.0px;font-size:11.5px;line-height:16px;color:#e6e6e6;letter-spacing:-0.71px;">Ready</span>
<svg class="a" style="left:61px;top:709px;" width="16" height="16" viewBox="0 0 16 16"><path d="M6.4 2.2 A5.8 5.8 0 1 0 12.6 10.8" fill="none" stroke="#e8e8e8" stroke-width="1.5" stroke-dasharray="2.6 1.5"/>
<path d="M6.8 .6 V8.4 M4.4 4 H9.6" stroke="#e8e8e8" stroke-width="1.3"/>
<path d="M8 7.8 L15.4 15 M15.4 7.8 L8 15" stroke="#f0f0f0" stroke-width="1.8"/></svg>
<span id="t54" class="t" style="left:79.0px;top:709.2px;font-size:11.5px;line-height:16px;color:#f0f0f0;font-weight:700;letter-spacing:-0.46px;">Accessibility: Investigate</span>
<div class="a" style="left:1066px;top:707px;width:40px;height:21px;background:#4d4d4d;"></div>
<svg class="a" style="left:1079px;top:710px;" width="13" height="13" viewBox="0 0 13 13"><rect x=".6" y=".6" width="11.8" height="11.8" fill="none" stroke="#f0f0f0" stroke-width="1.2"/><path d="M.6 4.6 H12.4 M.6 8.5 H12.4 M4.6 .6 V12.4 M8.5 .6 V12.4" stroke="#f0f0f0" stroke-width="1.1"/></svg>
<svg class="a" style="left:1118.5px;top:710px;" width="15" height="13" viewBox="0 0 15 13"><rect x=".6" y=".6" width="13.8" height="11.8" fill="none" stroke="#f0f0f0" stroke-width="1.2"/><rect x="3.6" y="3.1" width="7.8" height="6.8" fill="none" stroke="#f0f0f0" stroke-width="1.1"/><path d="M5.6 5.4 H9.6 M5.6 7.6 H9.6" stroke="#f0f0f0" stroke-width="1"/></svg>
<svg class="a" style="left:1159px;top:710px;" width="14" height="13" viewBox="0 0 14 13"><rect x=".6" y=".6" width="12.8" height="11.8" fill="none" stroke="#f0f0f0" stroke-width="1.2"/><rect x="1" y="1" width="4" height="7" fill="#f0f0f0"/><rect x="7.5" y="1" width="5.5" height="7" fill="#f0f0f0"/></svg>
<div class="a" style="left:1192px;top:716px;width:8px;height:1px;background:#e0e0e0;"></div>
<div class="a" style="left:1205px;top:716px;width:100px;height:1px;background:#e0e0e0;"></div>
<div class="a" style="left:1253px;top:711px;width:5px;height:12px;background:#f0f0f0;"></div>
<div class="a" style="left:1310px;top:716px;width:8px;height:1px;background:#e0e0e0;"></div>
<div class="a" style="left:1313.5px;top:712.5px;width:1px;height:8px;background:#e0e0e0;"></div>
<span id="t55" class="t" style="left:1331.5px;top:709.0px;font-size:11.5px;line-height:16px;color:#e6e6e6;letter-spacing:-0.97px;">100%</span>
<div class="a" style="left:0px;top:728px;width:1366px;height:40px;background:linear-gradient(to right,#2d2d2d 0,#2d2d2d 40%,#2b2b2b 62%,#282828 70%,#212121 76%,#1e1e1e 80%,#1f1f1f 88%,#222 100%);"></div>
<svg class="a" style="left:16px;top:740px;" width="16" height="16" viewBox="0 0 16 16"><path d="M0 2.3 L6.8 1.3 V7.6 H0 Z M7.8 1.2 L16 0 V7.6 H7.8 Z M0 8.5 H6.8 V14.8 L0 13.8 Z M7.8 8.5 H16 V16 L7.8 14.9 Z" fill="#fff"/></svg>
<div class="a" style="left:48px;top:728px;width:288px;height:40px;background:#333;border:1px solid #6e6e6e;border-bottom:none;"></div>
<svg class="a" style="left:60px;top:740px;" width="17" height="17" viewBox="0 0 17 17"><circle cx="10.2" cy="6.4" r="5.4" fill="none" stroke="#e6e6e6" stroke-width="1.3"/><path d="M6.4 10.4 L.8 16" stroke="#e6e6e6" stroke-width="1.4"/></svg>
<span id="t56" class="t" style="left:88.8px;top:738.9px;font-size:15px;line-height:20px;color:#dcdcdc;letter-spacing:-0.33px;">Type here to search</span>
<svg class="a" style="left:256px;top:729px;" width="80" height="39" viewBox="0 0 80 39"><defs><clipPath id="hc"><rect x="0" y="0" width="79.6" height="39"/></clipPath>
<linearGradient id="hg1" x1="0" y1="0" x2="1" y2="1"><stop offset="0" stop-color="#e9c12c"/><stop offset=".6" stop-color="#d9b526"/><stop offset="1" stop-color="#c4b21e"/></linearGradient>
<linearGradient id="hg2" x1="0" y1="0" x2="1" y2="0"><stop offset="0" stop-color="#5d9418"/><stop offset=".45" stop-color="#b4c61e"/><stop offset=".75" stop-color="#d2d21a"/><stop offset="1" stop-color="#8aa81a"/></linearGradient>
<clipPath id="hy"><path d="M0 39 L20 18 Q23 15.6 27 16 H39 Q45 16.6 49 18.8 L55 22.6 L66 27 L80 29 V39 Z"/></clipPath>
<clipPath id="hgc"><path d="M6 39 Q18 31 33.5 27.3 Q50 26.4 65 29.4 L80 33.4 V39 Z"/></clipPath></defs>
<g clip-path="url(#hc)">
<path d="M0 39 L20 18 Q23 15.6 27 16 H39 Q45 16.6 49 18.8 L55 22.6 L66 27 L80 29 V39 Z" fill="url(#hg1)"/>
<g clip-path="url(#hy)" stroke="#8fa51c" stroke-width="1.5" opacity=".85"><path d="M22 14 L52 32 M28 13 L58 31 M34 12 L64 30 M16 19 L44 36 M10 24 L36 40 M5 30 L24 42 M66 24 L84 34 M72 23 L88 32"/></g>
<path d="M6 39 Q18 31 33.5 27.3 Q50 26.4 65 29.4 L80 33.4 V39 Z" fill="url(#hg2)"/>
<g clip-path="url(#hgc)" stroke="#4e8a12" stroke-width="2.2" opacity=".7"><path d="M14 42 L30 26 M24 42 L40 25 M34 42 L49 25 M44 42 L58 26 M54 42 L66 28 M64 42 L74 30 M74 42 L82 32"/></g>
<path d="M13.5 32.6 Q13 29 17 28.6 Q19 26.4 22 28 Q25.4 28 25 30.6 Q22 31 19 32.6 Q16 34.6 13.5 32.6 Z" fill="#3f9a46"/>
<path d="M16 19.6 Q15.6 17 18 16.6 Q19.6 14.6 21.6 16 L22.6 18 Q19 18.4 16 19.6 Z" fill="#58a43a"/>
<ellipse cx="45.6" cy="17" rx="5" ry="3" fill="#efa41e"/><ellipse cx="40" cy="15.4" rx="3.4" ry="2" fill="#d4b820"/>
<ellipse cx="50.6" cy="25.4" rx="4.8" ry="3.2" fill="#f0981c"/><ellipse cx="73.6" cy="27" rx="5.2" ry="3.2" fill="#f0a31c"/>
<rect x="29.9" y="4.9" width="4.9" height="11.2" fill="#dda01c"/><rect x="33" y="4.9" width="1.8" height="11.2" fill="#c88a14"/>
<path d="M29.7 5.1 L32.3 .6 L35 5.1 Z" fill="#4a90e0"/>
<g fill="#6b4410"><rect x="31.4" y="7" width="1" height="1.6"/><rect x="31.4" y="10" width="1" height="1.6"/><rect x="31.4" y="13" width="1" height="1.6"/></g>
<rect x="22.3" y="12.6" width="7.6" height="4" fill="#c8951e"/><rect x="26.6" y="12.6" width="3.3" height="4" fill="#e8cf8c"/><path d="M25 12.6 L26 11.6 H29 L29.9 12.6 Z" fill="#3d5a7a"/>
<rect x="55.2" y="24.4" width="7.4" height="6" fill="#dfe3f2"/><rect x="62.6" y="24.2" width="2.6" height="7.2" fill="#f4f0e6"/>
<path d="M54.2 24.6 L56.4 21.6 H63.8 L65.4 24.4 L62.6 24.6 Z" fill="#c9601e"/>
<g fill="#7c86aa"><rect x="56.2" y="25.6" width="1.2" height="1.6"/><rect x="58.4" y="25.6" width="1.2" height="1.6"/><rect x="60.4" y="25.6" width="1.2" height="1.6"/><rect x="56.2" y="28.2" width="1.2" height="1.8"/><rect x="58.4" y="28.2" width="1.2" height="1.8"/><rect x="60.4" y="28.2" width="1.2" height="1.8"/></g>
</g></svg>
<svg class="a" style="left:352px;top:740px;" width="17" height="16" viewBox="0 0 17 16"><path d="M.7 3.2 V.7 H11.3 V3.2 M.7 12.8 V15.3 H11.3 V12.8 M1.4 4.6 H10.6 V11.4 H1.4 Z" fill="none" stroke="#f0f0f0" stroke-width="1.3"/><path d="M15 .4 V3.4 M15 6 V15.6" stroke="#f0f0f0" stroke-width="1.3"/><rect x="13.6" y="4.2" width="2.8" height="2.4" fill="#f0f0f0"/></svg>
<svg class="a" style="left:399px;top:736.5px;" width="24" height="24" viewBox="0 0 24 24"><path d="M6.5 7 V3.6 Q6.5 1 9 1 H15 Q17.5 1 17.5 3.6 V7" fill="none" stroke="#2ea3e6" stroke-width="1.8"/>
<path d="M0 5.5 H24 V20 Q24 24 20 24 H4 Q0 24 0 20 Z" fill="#f4f4f4"/>
<rect x="7.2" y="9.6" width="4.4" height="4.4" fill="#f25022"/><rect x="12.4" y="9.6" width="4.4" height="4.4" fill="#7fba00"/><rect x="7.2" y="14.8" width="4.4" height="4.4" fill="#00a4ef"/><rect x="12.4" y="14.8" width="4.4" height="4.4" fill="#ffb900"/></svg>
<svg class="a" style="left:447.8px;top:735.7px;" width="24.5" height="24.5" viewBox="0 0 24.5 24.5"><defs><linearGradient id="eg1" x1=".1" y1="0" x2=".7" y2="1"><stop offset="0" stop-color="#2fb4ee"/><stop offset=".55" stop-color="#1687de"/><stop offset="1" stop-color="#0b61c0"/></linearGradient>
<linearGradient id="eg2" x1="0" y1=".2" x2="1" y2=".6"><stop offset="0" stop-color="#2fb8ee"/><stop offset=".45" stop-color="#30c4c8"/><stop offset=".8" stop-color="#4fd87e"/><stop offset="1" stop-color="#86e24e"/></linearGradient></defs>
<circle cx="12.2" cy="12.2" r="12.2" fill="url(#eg1)"/>
<path d="M.3 10.4 A12.2 12.2 0 0 1 24.4 11.6 Q24.6 17 19.2 17 Q15.2 16.8 15.2 13.8 Q15.6 10.6 12.8 9.2 Q8 7 3.6 10.2 Q1.4 12 .7 15 Q.1 12.6 .3 10.4 Z" fill="url(#eg2)"/>
<path d="M7.2 11.6 Q6.2 17.6 10 21 Q14.4 24.2 19.2 22 Q21.6 20.6 22.4 18.4 Q17.4 21 13.2 18.4 Q10 16 10.4 12 Q10.6 10.6 11.6 9.8 Q9 9.6 7.2 11.6 Z" fill="#0e52a6"/>
<path d="M10.2 12.8 Q10 10 12.8 9.6 Q15 10.4 14.8 13.4 Q14.6 15.2 16 16.2 Q18.6 17.4 22.6 16 Q22.6 17.4 21.8 18.4 Q17.4 20 13.8 17.8 Q10.6 15.8 10.2 12.8 Z" fill="#2d2d2d"/>
<path d="M14.6 17.6 Q18 19.6 21.9 18.2 Q22.3 17.6 22.4 17.2 Q18.4 18.6 15.4 16.6 Z" fill="#0e52a6"/></svg>
<svg class="a" style="left:496.5px;top:736px;" width="24" height="24" viewBox="0 0 24 24"><path d="M12 1.2 A10.6 10.6 0 0 1 12 22.4 Q9 22.4 6.6 21 L1 22.6 L2.6 17.2 A10.6 10.6 0 0 1 12 1.2 Z" fill="none" stroke="#2ed15f" stroke-width="2.4" stroke-linejoin="round"/>
<path d="M8.4 6.4 Q7 6.6 6.8 8.6 Q7 12 10.6 15 Q14 17.6 16.4 16.6 Q17.6 15.8 17.4 14.6 L14.8 13.2 L13.6 14.4 Q11 13.4 9.8 10.6 L10.8 9.4 L9.6 6.6 Z" fill="#2ed15f"/></svg>
<svg class="a" style="left:513px;top:747px;" width="17" height="17" viewBox="0 0 17 17"><circle cx="8.5" cy="8.5" r="7.6" fill="#2b2b2b" fill-opacity=".85" stroke="#bdbdbd" stroke-width="1"/><path d="M9.6 5 L7 6.6 M9.6 4.6 V12.4" stroke="#fff" stroke-width="1.7" fill="none"/></svg>
<svg class="a" style="left:547px;top:738.8px;" width="21.3" height="18.2" viewBox="0 0 21.3 18.2"><path d="M0 1.6 Q0 .4 1.2 .4 H8.4 L9.6 1.8 V3.4 H0 Z" fill="#e8a20c"/>
<rect x="0" y="1.6" width="21.3" height="15.6" rx=".8" fill="#ffd560"/><rect x="0" y="1.6" width="9" height="1.6" fill="#eaa712"/>
<rect x="0" y="3.2" width="21.3" height="14" rx=".8" fill="#ffd866"/>
<path d="M4.3 18 V10.2 H17.9 V18 H14 V13.2 H8.1 V18 Z" fill="#3e96e6"/></svg>
<svg class="a" style="left:594.8px;top:736.4px;" width="24.3" height="22.6" viewBox="0 0 24.3 22.6"><path d="M0 7.6 L12.2 .2 L24.3 7.6 Z" fill="#0c5fb8"/>
<rect x="0" y="7.4" width="24.3" height="15.2" fill="#36c0f4"/>
<path d="M0 7.4 L24.3 22.6 H0 Z" fill="#1f9ae4"/>
<path d="M2.6 7.6 H21.8 L12.2 14.4 Z" fill="#f6f6f6"/>
<path d="M0 7.4 H24.3" stroke="#0c5fb8" stroke-width=".6"/></svg>
<svg class="a" style="left:643.7px;top:735.7px;" width="27" height="27" viewBox="0 0 27 27"><circle cx="12.2" cy="12.2" r="12.2" fill="#fbbc04"/>
<path d="M7.35 15 L1.93 5.61 A12.2 12.2 0 0 1 23.04 6.6 L12.2 6.6 L12.2 12.2 Z" fill="#ea4335"/>
<path d="M12.2 6.6 L23.04 6.6 A12.2 12.2 0 0 1 11.63 24.39 L17.05 15 L12.2 12.2 Z" fill="#fbbc04"/>
<path d="M17.05 15 L11.63 24.39 A12.2 12.2 0 0 1 1.93 5.61 L7.35 15 L12.2 12.2 Z" fill="#34a853"/>
<circle cx="12.2" cy="12.2" r="5.7" fill="#f4f4f4"/><circle cx="12.2" cy="12.2" r="4.5" fill="#4285f4"/>
<circle cx="18.8" cy="18.4" r="7.8" fill="#f0c896"/>
<path d="M17.6 13.6 L21.4 12.2 L24.4 14.6 L23.4 17.6 L19.6 18.6 Z" fill="#9a4a2a"/>
<path d="M13.2 17.2 Q18 15.6 24.6 17.4 L24 20.4 Q19 23.6 14 21 Z" fill="#2a5a56"/>
<path d="M12.6 18.4 L17.4 17.4 L18.6 20 L14.2 21.2 Z M19.4 20.2 L23.4 18.6 L24 21.4 L20.6 23 Z" fill="#111"/></svg>
<svg class="a" style="left:693px;top:736px;" width="24" height="24" viewBox="0 0 24 24"><circle cx="12" cy="12" r="12" fill="#1ed760"/>
<path d="M5.2 8.6 Q12 6.4 19.2 9.8" fill="none" stroke="#111" stroke-width="2.3" stroke-linecap="round"/>
<path d="M6 12.6 Q12 10.8 17.8 13.6" fill="none" stroke="#111" stroke-width="1.9" stroke-linecap="round"/>
<path d="M6.8 16.2 Q12 14.8 16.4 17" fill="none" stroke="#111" stroke-width="1.6" stroke-linecap="round"/></svg>
<div class="a" style="left:730px;top:728px;width:48px;height:40px;background:#545454;"></div>
<svg class="a" style="left:742px;top:737px;" width="24" height="22" viewBox="0 0 24 22"><rect x="6.5" y="0" width="17.5" height="21.5" rx="1.2" fill="#21a366"/>
<rect x="15.2" y="0" width="8.8" height="5.4" fill="#33c481"/><rect x="6.5" y="5.4" width="8.7" height="5.4" fill="#107c41"/><rect x="15.2" y="5.4" width="8.8" height="5.4" fill="#21a366"/>
<rect x="6.5" y="10.8" width="17.5" height="5.4" fill="#185c37"/><rect x="15.2" y="10.8" width="8.8" height="5.4" fill="#107c41"/><path d="M6.5 16.2 H24 V20.3 Q24 21.5 22.8 21.5 H7.7 Q6.5 21.5 6.5 20.3 Z" fill="#185c37"/>
<rect x="0" y="5" width="12.6" height="12.6" rx="1" fill="#107c41"/>
<path d="M3.4 7.6 L9.2 15 M9.2 7.6 L3.4 15" stroke="#fff" stroke-width="1.9"/></svg>
<svg class="a" style="left:791px;top:737px;" width="25" height="24" viewBox="0 0 25 24"><path d="M8 3 L16 -.2 L24 4.6 V17 L16 22 L8 18 Z" fill="#1c9be6"/>
<path d="M16 -.2 L24 4.6 L14 10 L9 6 Z" fill="#2fb0f0"/>
<path d="M24 4.8 V11.4 L13 18.2 V11 Z" fill="#0a5cb4"/>
<path d="M24 11.4 V17 L16 22 L8 18.4 L13 18.2 Z" fill="#3cc0f5"/>
<rect x="0" y="4.4" width="14.2" height="13.6" rx="1" fill="#0f6fd0"/>
<ellipse cx="7" cy="11.2" rx="3.5" ry="4" fill="none" stroke="#fff" stroke-width="1.9"/>
<rect x="7" y="16.4" width="17.4" height="7" rx="1.4" fill="#2ee0e6"/>
<text x="8.4" y="22.3" font-family="Liberation Sans, sans-serif" font-size="6.6" font-weight="700" fill="#083048" letter-spacing=".35">NEW</text></svg>
<div class="a" style="left:489px;top:766px;width:40px;height:2px;background:#76b9ed;"></div>
<div class="a" style="left:538px;top:766px;width:40px;height:2px;background:#76b9ed;"></div>
<div class="a" style="left:636px;top:766px;width:31px;height:2px;background:#76b9ed;"></div>
<div class="a" style="left:685px;top:766px;width:40px;height:2px;background:#76b9ed;"></div>
<div class="a" style="left:730px;top:766px;width:48px;height:2px;background:#76b9ed;"></div>
<div class="a" style="left:783px;top:766px;width:40px;height:2px;background:#76b9ed;"></div>
<div class="a" style="left:667px;top:766px;width:9px;height:2px;background:#5a8fc0;"></div>
<div class="a" style="left:666px;top:766px;width:1px;height:2px;background:#2c2c2c;"></div>
<svg class="a" style="left:994px;top:735.5px;" width="25" height="23" viewBox="0 0 25 23"><defs><linearGradient id="mo" x1="0" y1="0" x2="0" y2="1"><stop offset="0" stop-color="#ffd43a"/><stop offset="1" stop-color="#f08a10"/></linearGradient></defs>
<path d="M11.5 2.4 A10.2 10.2 0 1 1 3 17.2 A8.4 8.4 0 0 0 11.5 2.4 Z" fill="url(#mo)"/>
<g fill="#bcd4f2"><ellipse cx="6.8" cy="6.6" rx="6.6" ry="2.8"/><circle cx="5" cy="4.8" r="2.8"/><circle cx="8.6" cy="3.8" r="3.2"/></g>
<g fill="#c4daf5"><ellipse cx="17" cy="18.6" rx="7" ry="3"/><circle cx="15" cy="16.6" r="3"/><circle cx="19" cy="15.8" r="3.4"/></g></svg>
<span id="t57" class="t" style="left:1026.0px;top:738.2px;font-size:14.5px;line-height:20px;color:#f0f0f0;letter-spacing:-1.00px;">25°C</span>
<svg class="a" style="left:1080px;top:743.7px;" width="13" height="8" viewBox="0 0 13 8"><path d="M1 7.2 L6.5 1.4 L12 7.2" fill="none" stroke="#f0f0f0" stroke-width="1.4"/></svg>
<svg class="a" style="left:1105.6px;top:739.8px;" width="12" height="17" viewBox="0 0 12 17"><path d="M1.4 2.4 Q5.4 .2 9.4 2.4 M1.4 14.6 Q5.4 16.8 9.4 14.6" fill="none" stroke="#f0f0f0" stroke-width="1.2"/>
<rect x=".7" y="4.8" width="8.2" height="7.2" rx="1.4" fill="none" stroke="#f4f4f4" stroke-width="1.4"/><path d="M8.9 7.4 L11.4 5.8 V11 L8.9 9.4 Z" fill="#f4f4f4"/></svg>
<svg class="a" style="left:1126.8px;top:741.5px;" width="17" height="12" viewBox="0 0 17 12"><path d="M4 10.5 Q.4 10.5 .4 7.6 Q.6 5 3.4 4.8 Q4.6 1.6 7.8 1.6 Q10.4 1.6 11.6 4 Q14 3.6 15 6 Q16.6 6.6 16.4 8.6 Q16.2 10.5 14 10.5 Z" fill="#e4e4e4"/>
<path d="M3.4 4.8 Q4.6 1.6 7.8 1.6 Q10.4 1.6 11.6 4 L8 7.6 Z" fill="#9a9a9a"/></svg>
<svg class="a" style="left:1152.6px;top:740px;" width="12" height="17" viewBox="0 0 12 17"><rect x="2.4" y="0" width="7.2" height="11.6" rx="1.7" fill="#f4f4f4"/><path d="M.6 8 V9 Q.8 13.6 6 13.6 Q11.2 13.6 11.4 9 V8 M6 13.6 V15.6 M3.2 15.7 H8.8" fill="none" stroke="#f4f4f4" stroke-width="1.1"/></svg>
<svg class="a" style="left:1176px;top:744px;" width="16" height="10" viewBox="0 0 16 10"><rect x=".5" y=".5" width="13" height="8" fill="none" stroke="#f4f4f4" stroke-width="1"/><rect x="2" y="2" width="5.4" height="5" fill="#f4f4f4"/><rect x="14" y="3" width="1.2" height="3" fill="#f4f4f4"/></svg>
<svg class="a" style="left:1201.5px;top:742.3px;" width="13" height="13" viewBox="0 0 13 13"><g fill="none" stroke="#e6e6e6" stroke-width="1.3"><path d="M.8 12 A11.4 11.4 0 0 1 12.2 .8"/><path d="M4.4 12.2 A8 8 0 0 1 12.2 4.4"/><path d="M7.6 12.2 A4.8 4.8 0 0 1 12.2 7.6"/></g><circle cx="10.8" cy="11" r="1.5" fill="#e6e6e6"/></svg>
<svg class="a" style="left:1222.5px;top:741.2px;" width="17" height="14" viewBox="0 0 17 14"><path d="M.7 4.6 H3.4 L7 1.2 V12.4 L3.4 9 H.7 Z" fill="none" stroke="#f0f0f0" stroke-width="1.1" stroke-linejoin="round"/>
<path d="M9 4.6 Q10.6 6.8 9 9 M11.2 2.8 Q14 6.8 11.2 10.8" fill="none" stroke="#f0f0f0" stroke-width="1.1"/><path d="M13.6 1 Q17.2 6.8 13.6 12.6" fill="none" stroke="#8a8a8a" stroke-width="1"/></svg>
<span id="t58" class="t" style="left:1253.8px;top:730.7px;font-size:12px;line-height:16px;color:#f0f0f0;letter-spacing:-0.42px;">07:50 PM</span>
<span id="t59" class="t" style="left:1250.2px;top:748.9px;font-size:12px;line-height:16px;color:#f0f0f0;letter-spacing:-0.38px;">10/03/2024</span>
<svg class="a" style="left:1324.5px;top:740px;" width="17" height="17" viewBox="0 0 17 17"><path d="M.7 .7 H16.3 V12.4 H11 L8.5 15.2 L6 12.4 H.7 Z" fill="none" stroke="#f0f0f0" stroke-width="1.3"/></svg>
<div class="a" style="left:1361px;top:728px;width:1px;height:40px;background:#8a8a8a;"></div>
</body></html>
